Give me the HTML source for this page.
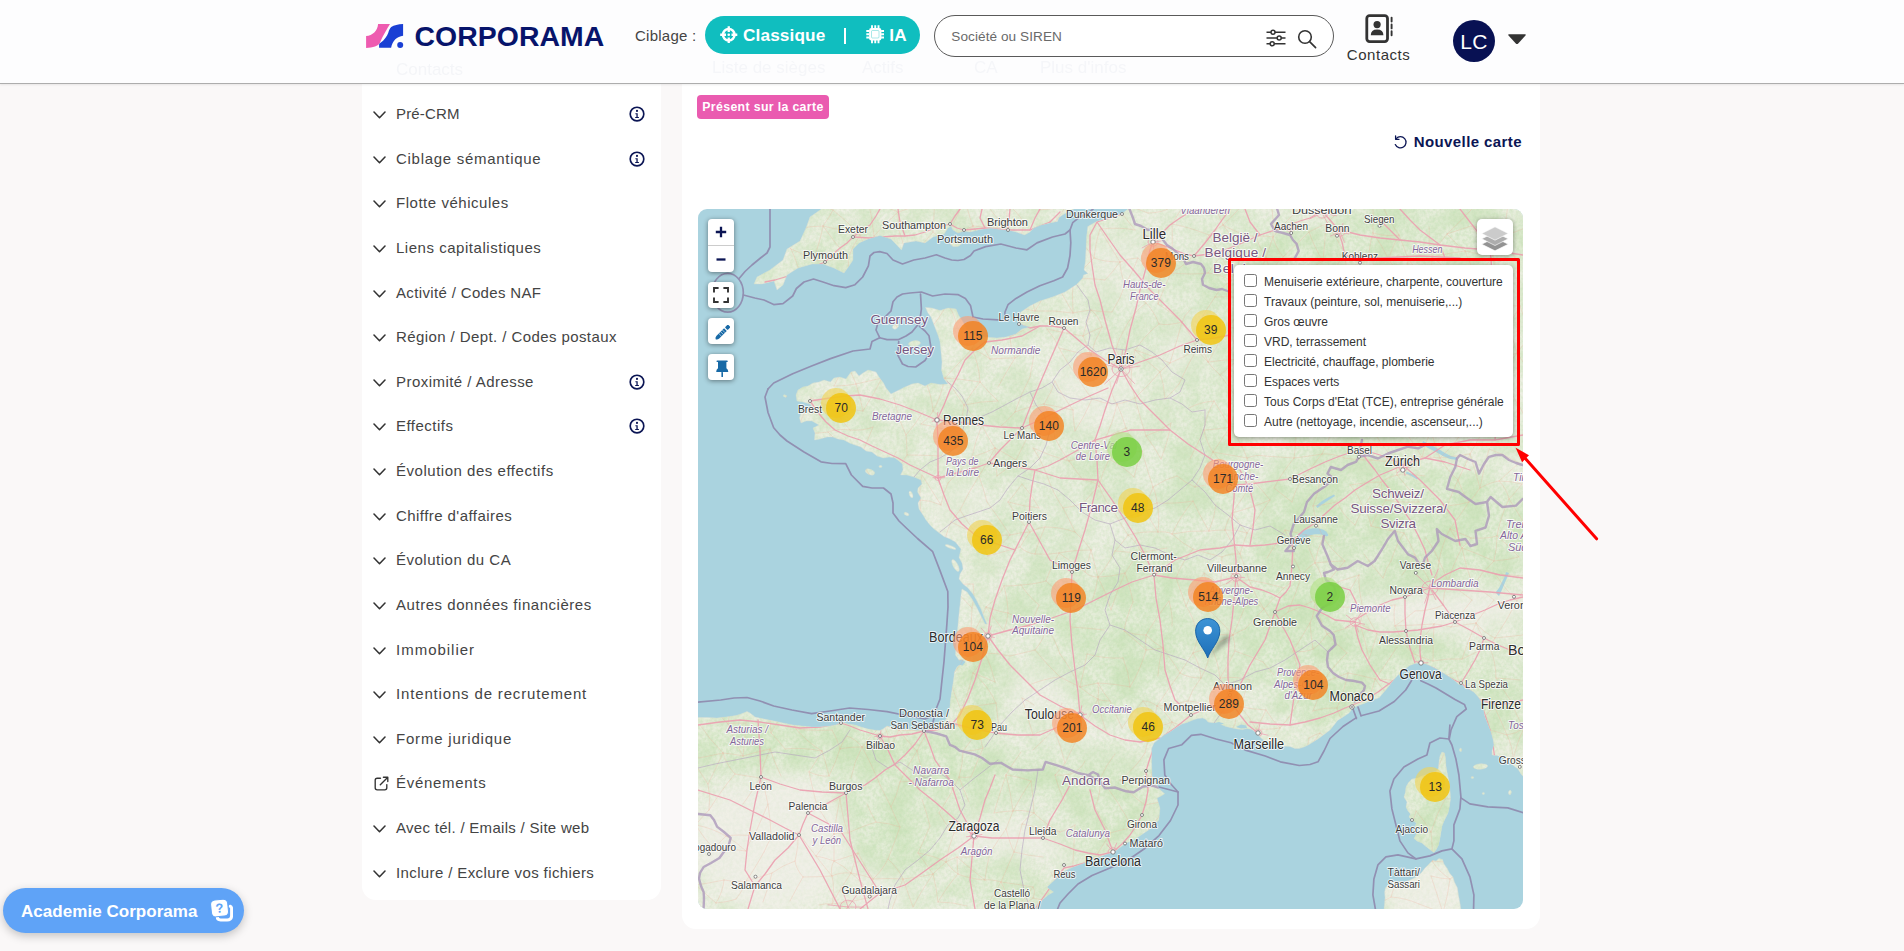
<!DOCTYPE html>
<html lang="fr"><head><meta charset="utf-8"><title>Corporama</title>
<style>
*{box-sizing:border-box;margin:0;padding:0}
html,body{width:1904px;height:951px;overflow:hidden;background:#faf8f8;font-family:"Liberation Sans",sans-serif;color:#333}
.abs{position:absolute}
#hdr{position:absolute;left:0;top:0;width:1904px;height:84px;background:#fdfdfe;border-bottom:1.5px solid #adadad;z-index:50;box-shadow:0 1px 2px rgba(0,0,0,.08)}
#side{position:absolute;left:362px;top:84px;width:299px;height:816px;background:#fff;border-radius:0 0 14px 14px}
#main{position:absolute;left:681.5px;top:84px;width:858.5px;height:845px;background:#fff;border-radius:0 0 14px 14px}
.it{position:absolute;left:396px;font-size:15px;line-height:20px;color:#444;white-space:nowrap}
.chev{position:absolute;left:373px;width:13px;height:8px}
.info{position:absolute;left:629px;width:16px;height:16px}
.t{white-space:nowrap;position:absolute}
</style></head><body>
<div id="side"></div>
<div class="it" style="top:103.5px;letter-spacing:0.171px">Pré-CRM</div>
<svg class="chev" style="top:110.5px" viewBox="0 0 13 8" fill="none" stroke="#333" stroke-width="1.55" stroke-linecap="round" stroke-linejoin="round"><path d="M1 1L6.5 6.7L12 1"/></svg>
<svg class="info" style="top:105.7px" viewBox="0 0 16 16"><circle cx="8" cy="8" r="6.8" fill="none" stroke="#0b1554" stroke-width="1.65"/>
<circle cx="8" cy="4.9" r="1.05" fill="#0b1554"/><path d="M6.4 7.2H8.7V11H9.9V12H6.2V11H7.4V8.2H6.4Z" fill="#0b1554"/></svg>
<div class="it" style="top:148.5px;letter-spacing:0.711px">Ciblage sémantique</div>
<svg class="chev" style="top:155.5px" viewBox="0 0 13 8" fill="none" stroke="#333" stroke-width="1.55" stroke-linecap="round" stroke-linejoin="round"><path d="M1 1L6.5 6.7L12 1"/></svg>
<svg class="info" style="top:150.7px" viewBox="0 0 16 16"><circle cx="8" cy="8" r="6.8" fill="none" stroke="#0b1554" stroke-width="1.65"/>
<circle cx="8" cy="4.9" r="1.05" fill="#0b1554"/><path d="M6.4 7.2H8.7V11H9.9V12H6.2V11H7.4V8.2H6.4Z" fill="#0b1554"/></svg>
<div class="it" style="top:192.5px;letter-spacing:0.530px">Flotte véhicules</div>
<svg class="chev" style="top:199.5px" viewBox="0 0 13 8" fill="none" stroke="#333" stroke-width="1.55" stroke-linecap="round" stroke-linejoin="round"><path d="M1 1L6.5 6.7L12 1"/></svg>
<div class="it" style="top:237.5px;letter-spacing:0.531px">Liens capitalistiques</div>
<svg class="chev" style="top:244.5px" viewBox="0 0 13 8" fill="none" stroke="#333" stroke-width="1.55" stroke-linecap="round" stroke-linejoin="round"><path d="M1 1L6.5 6.7L12 1"/></svg>
<div class="it" style="top:282.5px;letter-spacing:0.350px">Activité / Codes NAF</div>
<svg class="chev" style="top:289.5px" viewBox="0 0 13 8" fill="none" stroke="#333" stroke-width="1.55" stroke-linecap="round" stroke-linejoin="round"><path d="M1 1L6.5 6.7L12 1"/></svg>
<div class="it" style="top:326.5px;letter-spacing:0.414px">Région / Dept. / Codes postaux</div>
<svg class="chev" style="top:333.5px" viewBox="0 0 13 8" fill="none" stroke="#333" stroke-width="1.55" stroke-linecap="round" stroke-linejoin="round"><path d="M1 1L6.5 6.7L12 1"/></svg>
<div class="it" style="top:371.5px;letter-spacing:0.457px">Proximité / Adresse</div>
<svg class="chev" style="top:378.5px" viewBox="0 0 13 8" fill="none" stroke="#333" stroke-width="1.55" stroke-linecap="round" stroke-linejoin="round"><path d="M1 1L6.5 6.7L12 1"/></svg>
<svg class="info" style="top:373.7px" viewBox="0 0 16 16"><circle cx="8" cy="8" r="6.8" fill="none" stroke="#0b1554" stroke-width="1.65"/>
<circle cx="8" cy="4.9" r="1.05" fill="#0b1554"/><path d="M6.4 7.2H8.7V11H9.9V12H6.2V11H7.4V8.2H6.4Z" fill="#0b1554"/></svg>
<div class="it" style="top:415.5px;letter-spacing:0.478px">Effectifs</div>
<svg class="chev" style="top:422.5px" viewBox="0 0 13 8" fill="none" stroke="#333" stroke-width="1.55" stroke-linecap="round" stroke-linejoin="round"><path d="M1 1L6.5 6.7L12 1"/></svg>
<svg class="info" style="top:417.7px" viewBox="0 0 16 16"><circle cx="8" cy="8" r="6.8" fill="none" stroke="#0b1554" stroke-width="1.65"/>
<circle cx="8" cy="4.9" r="1.05" fill="#0b1554"/><path d="M6.4 7.2H8.7V11H9.9V12H6.2V11H7.4V8.2H6.4Z" fill="#0b1554"/></svg>
<div class="it" style="top:460.5px;letter-spacing:0.524px">Évolution des effectifs</div>
<svg class="chev" style="top:467.5px" viewBox="0 0 13 8" fill="none" stroke="#333" stroke-width="1.55" stroke-linecap="round" stroke-linejoin="round"><path d="M1 1L6.5 6.7L12 1"/></svg>
<div class="it" style="top:505.5px;letter-spacing:0.439px">Chiffre d'affaires</div>
<svg class="chev" style="top:512.5px" viewBox="0 0 13 8" fill="none" stroke="#333" stroke-width="1.55" stroke-linecap="round" stroke-linejoin="round"><path d="M1 1L6.5 6.7L12 1"/></svg>
<div class="it" style="top:549.5px;letter-spacing:0.508px">Évolution du CA</div>
<svg class="chev" style="top:556.5px" viewBox="0 0 13 8" fill="none" stroke="#333" stroke-width="1.55" stroke-linecap="round" stroke-linejoin="round"><path d="M1 1L6.5 6.7L12 1"/></svg>
<div class="it" style="top:594.5px;letter-spacing:0.539px">Autres données financières</div>
<svg class="chev" style="top:601.5px" viewBox="0 0 13 8" fill="none" stroke="#333" stroke-width="1.55" stroke-linecap="round" stroke-linejoin="round"><path d="M1 1L6.5 6.7L12 1"/></svg>
<div class="it" style="top:639.5px;letter-spacing:0.991px">Immobilier</div>
<svg class="chev" style="top:646.5px" viewBox="0 0 13 8" fill="none" stroke="#333" stroke-width="1.55" stroke-linecap="round" stroke-linejoin="round"><path d="M1 1L6.5 6.7L12 1"/></svg>
<div class="it" style="top:683.5px;letter-spacing:0.840px">Intentions de recrutement</div>
<svg class="chev" style="top:690.5px" viewBox="0 0 13 8" fill="none" stroke="#333" stroke-width="1.55" stroke-linecap="round" stroke-linejoin="round"><path d="M1 1L6.5 6.7L12 1"/></svg>
<div class="it" style="top:728.5px;letter-spacing:0.792px">Forme juridique</div>
<svg class="chev" style="top:735.5px" viewBox="0 0 13 8" fill="none" stroke="#333" stroke-width="1.55" stroke-linecap="round" stroke-linejoin="round"><path d="M1 1L6.5 6.7L12 1"/></svg>
<div class="it" style="top:772.5px;letter-spacing:0.701px">Événements</div>
<svg class="abs" style="left:373.7px;top:775.5px" width="15" height="15" viewBox="0 0 15 15" fill="none" stroke="#333" stroke-width="1.35" stroke-linecap="round" stroke-linejoin="round">
<path d="M6.5 2.2H3.2Q1.2 2.2 1.2 4.2V11.8Q1.2 13.8 3.2 13.8H10.8Q12.8 13.8 12.8 11.8V8.6"/><path d="M6.3 8.7L13.8 1.2M9.4 1.2H13.8V5.6"/></svg>
<div class="it" style="top:817.5px;letter-spacing:0.296px">Avec tél. / Emails / Site web</div>
<svg class="chev" style="top:824.5px" viewBox="0 0 13 8" fill="none" stroke="#333" stroke-width="1.55" stroke-linecap="round" stroke-linejoin="round"><path d="M1 1L6.5 6.7L12 1"/></svg>
<div class="it" style="top:862.5px;letter-spacing:0.382px">Inclure / Exclure vos fichiers</div>
<svg class="chev" style="top:869.5px" viewBox="0 0 13 8" fill="none" stroke="#333" stroke-width="1.55" stroke-linecap="round" stroke-linejoin="round"><path d="M1 1L6.5 6.7L12 1"/></svg>
<div id="main"></div>
<div class="abs" style="left:697px;top:95px;width:132px;height:24px;border-radius:4px;background:#ea5bb0"></div>
<div class="t" style="left:702.3px;top:99.5px;font-size:12.3px;line-height:15px;font-weight:700;color:#fff;letter-spacing:0.357px">Présent sur la carte</div>
<svg class="abs" style="left:1392.5px;top:134.7px" width="15" height="15" viewBox="0 0 15 15" fill="none" stroke="#0b1554" stroke-width="1.3" stroke-linecap="round" stroke-linejoin="round">
<path d="M3.2 3.6A5.6 5.6 0 1 1 2.3 9.6"/><path d="M2.6 0.9V4.3H6"/></svg>
<div class="t" style="left:1413.7px;top:132.5px;font-size:15px;line-height:18px;font-weight:700;color:#0b1554;letter-spacing:0.411px">Nouvelle carte</div>
<svg class="abs" style="left:698px;top:209px;border-radius:9px" width="825" height="700" viewBox="698 209 825 700">
<defs><clipPath id="land"><polygon points="823,205 821.5,209 810,217 806,228 800,241 787,249 783,260 770,270 757,277 754,284 762,284 774,281 777,290 783,285 787,275 798,268 812,264 823,264 834,268 844,273 849,266 853,260 853,249 859,243 868,239 880,235.5 891,239 901.5,250 904,243 916,241 925,243 933,237 944,234 948,228 951,226 953,230 958,233 964,231 970,232 980,229.5 991,228 1001,229.5 1008,230 1016,232 1024.7,235 1030,232 1033.6,228 1041,225 1051,222.7 1057.5,221.4 1059,217.6 1062.6,215 1067.6,212 1074,209 1076,205"/><polygon points="949,243 953,241.5 958,242 961.5,244 958,246.5 953,246.5"/><polygon points="1129,205 1128,209 1122,213.8 1109,217.6 1096.6,221.4 1087.8,226.5 1086.6,236.5 1086,249 1085.3,261.8 1084,270 1088,273.5 1083.5,275 1082.8,278 1076.5,284.5 1065,292 1052.5,297 1039.9,301 1029.8,306 1021,312 1017.5,321 1023,325 1030,327 1022,329 1016,334 1006,337 997,338 985,337 975,335 967,330 963,322 958.5,315 956,309 948,308 940,310.5 932,308 925.5,307.5 928,313 931,317 934.6,326.4 938,335 940,341.5 941,352 942,362 941.5,370 944,379 948,384 940,384.5 931,383 925,386 918,383 912,384 905,387 899,390 891,394 886,388 883.5,383 879,377 876,372 868,370 863,373 859,376 855,371 851,372 846,379 840,377 834,378 830.5,382 824,380 819,382 813,383 808,386 803,387 798,390 796,395 797,401 803,402 810,404 813,408 806,410 801,413 799.5,418 801,423 806,421 812,421 819,425 813,428 815,433 814.5,440 820,439 827,437 833,437 838,439 844,440 849.5,443 855,445 861,447 866,451 872,452 877,456 883.5,458 889,457 895,458 899,461 902.5,464 903,470 900.6,475 907,475 914,477 921,480 922,484 918,488 917.6,492 921,498 918,503 919,509 923,515 926,520 930,525 933.5,528.5 938,532 944,536.6 950,539 955.4,542 961,549 959,557.4 962,563 963,569 960,574 959,579 963,584 968,588 973,594 977,601 981,609 984,617 987,624 985,624 981,616 977,608 972,599 967,592 962,589 961,595 960,605 959,614 958,625 957,635 956,645 955.5,655 959,660 961,664 957,667 954.5,672 953.5,680.5 952,690 950.5,700 949.7,709 948,716 944,722 938,728 930,729.5 925,729.7 915.7,730.6 909,729 902.5,729.7 895,728 887,726 883,729 880,730.6 874,730 868,729 861,727 855,725 848,724 842,722 836,725 830.5,726 820,727 811.6,727 802,726 793,725 783,723 774,721 764,719 755,717 750,713 747,711.5 741,714 736,715.5 726,717 717,718 707,717.5 694,717.4 694,913 1033,913 1035,909 1042.5,899.8 1048,895 1053.5,892 1049,889 1047,887 1054,880.6 1063,871.8 1072,867.4 1082,863.7 1095.5,858.5 1107,854 1114,852 1125,843.8 1136.7,838 1150,829 1158.8,820 1160,808.5 1157,798 1161,796 1164.7,793.7 1159,789 1155.9,783.4 1152,776 1151.6,763.7 1151.6,748.5 1154,743 1159,739 1164,735 1170.5,731.5 1176,727.5 1182,724 1187,722.5 1193,720 1198,718.5 1202.7,718 1206,719.5 1208,722 1214,723 1220,724 1226,726.5 1231,727.7 1237,729 1242.5,729.6 1247,728.5 1252,729.6 1255,732 1257.6,734 1261,738 1265,741 1270,743 1276.5,744.7 1283,746 1290,746.6 1295,748.5 1299,748.5 1304,747 1308.7,744.7 1313,742 1318,739 1324,734.5 1330,730 1334,725 1337.5,720.5 1343,717 1349,713 1352.7,708 1358,705.5 1364,703.4 1371,700.5 1379,697.7 1384,692 1388.6,686.4 1393,680.5 1398,675 1403.5,670 1409.5,665.5 1415,663.5 1420.8,662.7 1426,664 1432,666.5 1438,669.5 1443.5,673 1449,676.5 1455,680.7 1459,684.5 1462.5,684.5 1465,688 1468,688.5 1473.8,692 1478,696.5 1481.4,701.5 1483.5,709 1485,716.7 1488,724 1491,731.8 1493,739 1494,745 1492,751 1492,755 1497,755.5 1502,757 1506,760 1510,763 1514,766 1518,769 1521,774 1527,781 1527,205"/><polygon points="1442,752 1444.5,753 1445.5,758 1446,766 1447,772 1448.5,779 1450,790 1450.5,799 1449.5,806 1448,813 1444.5,820 1442,826 1441,832 1440,838 1438.5,845 1436.5,849 1434,852.5 1430.5,850 1426,846.5 1422,843 1417,841 1414,838.5 1416.5,834 1418.5,830 1415,826.5 1416.5,823 1412,820 1409,817 1410.5,814 1408,811 1406,807 1407,802 1404,797 1405.5,792 1406,787 1408.5,782.5 1412,779 1418,778 1422,776 1426,775 1431,772.5 1436,771.5 1438.5,768 1439,762 1440,756"/><polygon points="1383.5,913 1384.5,904 1385,897.8 1384.6,892 1385.4,887.9 1388.5,884.5 1393,882 1398,881.5 1404,882 1410,880 1416,877 1421,873 1425,868 1429,864 1432.6,860.3 1436,861 1439,858.5 1442.5,859.5 1444,864 1447,868 1449.5,873 1453,877 1454.5,882 1457.5,888 1458.5,895 1460,903 1461.5,913"/><ellipse cx="914.5" cy="343.5" rx="6" ry="2.8" transform="rotate(-8 914.5 343.5)"/><ellipse cx="895.5" cy="326.5" rx="3.2" ry="2.3" transform="rotate(-35 895.5 326.5)"/><ellipse cx="904.5" cy="319.5" rx="1.6" ry="1.0" transform="rotate(0 904.5 319.5)"/><ellipse cx="870" cy="472" rx="4.8" ry="2.6" transform="rotate(22 870 472)"/><ellipse cx="911" cy="494.5" rx="1.6" ry="3.5" transform="rotate(-20 911 494.5)"/><ellipse cx="906.5" cy="514" rx="2.6" ry="1.4" transform="rotate(25 906.5 514)"/><ellipse cx="950.5" cy="547" rx="5.6" ry="1.4" transform="rotate(20 950.5 547)"/><ellipse cx="955.5" cy="565.5" rx="2.4" ry="6.6" transform="rotate(-28 955.5 565.5)"/><ellipse cx="1480.5" cy="766.5" rx="7.2" ry="2.8" transform="rotate(-4 1480.5 766.5)"/><ellipse cx="1460.6" cy="749.9" rx="1.1" ry="1.7" transform="rotate(0 1460.6 749.9)"/><ellipse cx="1472.4" cy="777.5" rx="1.3" ry="1.0" transform="rotate(0 1472.4 777.5)"/><ellipse cx="1483.4" cy="793.4" rx="1.1" ry="1.0" transform="rotate(0 1483.4 793.4)"/><ellipse cx="1509.9" cy="792.5" rx="1.4" ry="2.2" transform="rotate(10 1509.9 792.5)"/><ellipse cx="880.5" cy="466.5" rx="1.6" ry="0.9" transform="rotate(0 880.5 466.5)"/><ellipse cx="785" cy="396" rx="1.8" ry="1.0" transform="rotate(20 785 396)"/></clipPath><filter id="bl6" x="-30%" y="-30%" width="160%" height="160%"><feGaussianBlur stdDeviation="6"/></filter><filter id="bl3" x="-30%" y="-30%" width="160%" height="160%"><feGaussianBlur stdDeviation="3"/></filter><filter id="bl10" x="-40%" y="-40%" width="180%" height="180%"><feGaussianBlur stdDeviation="9"/></filter><filter id="nz" x="0" y="0" width="100%" height="100%" color-interpolation-filters="sRGB"><feTurbulence type="fractalNoise" baseFrequency="0.035" numOctaves="3" seed="5"/><feColorMatrix values="0 0 0 0 0.78  0 0 0 0 0.88  0 0 0 0 0.71  2.8 0 0 0 -1.0"/></filter><filter id="nz2" x="0" y="0" width="100%" height="100%" color-interpolation-filters="sRGB"><feTurbulence type="fractalNoise" baseFrequency="0.3" numOctaves="2" seed="9"/><feColorMatrix values="0 0 0 0 0.74  0 0 0 0 0.86  0 0 0 0 0.68  1.8 0 0 0 -0.62"/></filter></defs>
<rect x="698" y="209" width="825" height="700" fill="#aad3df"/>
<g fill="#f1f0e8" stroke="#c9d7d6" stroke-width="0.5">
<polygon points="823,205 821.5,209 810,217 806,228 800,241 787,249 783,260 770,270 757,277 754,284 762,284 774,281 777,290 783,285 787,275 798,268 812,264 823,264 834,268 844,273 849,266 853,260 853,249 859,243 868,239 880,235.5 891,239 901.5,250 904,243 916,241 925,243 933,237 944,234 948,228 951,226 953,230 958,233 964,231 970,232 980,229.5 991,228 1001,229.5 1008,230 1016,232 1024.7,235 1030,232 1033.6,228 1041,225 1051,222.7 1057.5,221.4 1059,217.6 1062.6,215 1067.6,212 1074,209 1076,205"/>
<polygon points="949,243 953,241.5 958,242 961.5,244 958,246.5 953,246.5"/>
<polygon points="1129,205 1128,209 1122,213.8 1109,217.6 1096.6,221.4 1087.8,226.5 1086.6,236.5 1086,249 1085.3,261.8 1084,270 1088,273.5 1083.5,275 1082.8,278 1076.5,284.5 1065,292 1052.5,297 1039.9,301 1029.8,306 1021,312 1017.5,321 1023,325 1030,327 1022,329 1016,334 1006,337 997,338 985,337 975,335 967,330 963,322 958.5,315 956,309 948,308 940,310.5 932,308 925.5,307.5 928,313 931,317 934.6,326.4 938,335 940,341.5 941,352 942,362 941.5,370 944,379 948,384 940,384.5 931,383 925,386 918,383 912,384 905,387 899,390 891,394 886,388 883.5,383 879,377 876,372 868,370 863,373 859,376 855,371 851,372 846,379 840,377 834,378 830.5,382 824,380 819,382 813,383 808,386 803,387 798,390 796,395 797,401 803,402 810,404 813,408 806,410 801,413 799.5,418 801,423 806,421 812,421 819,425 813,428 815,433 814.5,440 820,439 827,437 833,437 838,439 844,440 849.5,443 855,445 861,447 866,451 872,452 877,456 883.5,458 889,457 895,458 899,461 902.5,464 903,470 900.6,475 907,475 914,477 921,480 922,484 918,488 917.6,492 921,498 918,503 919,509 923,515 926,520 930,525 933.5,528.5 938,532 944,536.6 950,539 955.4,542 961,549 959,557.4 962,563 963,569 960,574 959,579 963,584 968,588 973,594 977,601 981,609 984,617 987,624 985,624 981,616 977,608 972,599 967,592 962,589 961,595 960,605 959,614 958,625 957,635 956,645 955.5,655 959,660 961,664 957,667 954.5,672 953.5,680.5 952,690 950.5,700 949.7,709 948,716 944,722 938,728 930,729.5 925,729.7 915.7,730.6 909,729 902.5,729.7 895,728 887,726 883,729 880,730.6 874,730 868,729 861,727 855,725 848,724 842,722 836,725 830.5,726 820,727 811.6,727 802,726 793,725 783,723 774,721 764,719 755,717 750,713 747,711.5 741,714 736,715.5 726,717 717,718 707,717.5 694,717.4 694,913 1033,913 1035,909 1042.5,899.8 1048,895 1053.5,892 1049,889 1047,887 1054,880.6 1063,871.8 1072,867.4 1082,863.7 1095.5,858.5 1107,854 1114,852 1125,843.8 1136.7,838 1150,829 1158.8,820 1160,808.5 1157,798 1161,796 1164.7,793.7 1159,789 1155.9,783.4 1152,776 1151.6,763.7 1151.6,748.5 1154,743 1159,739 1164,735 1170.5,731.5 1176,727.5 1182,724 1187,722.5 1193,720 1198,718.5 1202.7,718 1206,719.5 1208,722 1214,723 1220,724 1226,726.5 1231,727.7 1237,729 1242.5,729.6 1247,728.5 1252,729.6 1255,732 1257.6,734 1261,738 1265,741 1270,743 1276.5,744.7 1283,746 1290,746.6 1295,748.5 1299,748.5 1304,747 1308.7,744.7 1313,742 1318,739 1324,734.5 1330,730 1334,725 1337.5,720.5 1343,717 1349,713 1352.7,708 1358,705.5 1364,703.4 1371,700.5 1379,697.7 1384,692 1388.6,686.4 1393,680.5 1398,675 1403.5,670 1409.5,665.5 1415,663.5 1420.8,662.7 1426,664 1432,666.5 1438,669.5 1443.5,673 1449,676.5 1455,680.7 1459,684.5 1462.5,684.5 1465,688 1468,688.5 1473.8,692 1478,696.5 1481.4,701.5 1483.5,709 1485,716.7 1488,724 1491,731.8 1493,739 1494,745 1492,751 1492,755 1497,755.5 1502,757 1506,760 1510,763 1514,766 1518,769 1521,774 1527,781 1527,205"/>
<polygon points="1442,752 1444.5,753 1445.5,758 1446,766 1447,772 1448.5,779 1450,790 1450.5,799 1449.5,806 1448,813 1444.5,820 1442,826 1441,832 1440,838 1438.5,845 1436.5,849 1434,852.5 1430.5,850 1426,846.5 1422,843 1417,841 1414,838.5 1416.5,834 1418.5,830 1415,826.5 1416.5,823 1412,820 1409,817 1410.5,814 1408,811 1406,807 1407,802 1404,797 1405.5,792 1406,787 1408.5,782.5 1412,779 1418,778 1422,776 1426,775 1431,772.5 1436,771.5 1438.5,768 1439,762 1440,756"/>
<polygon points="1383.5,913 1384.5,904 1385,897.8 1384.6,892 1385.4,887.9 1388.5,884.5 1393,882 1398,881.5 1404,882 1410,880 1416,877 1421,873 1425,868 1429,864 1432.6,860.3 1436,861 1439,858.5 1442.5,859.5 1444,864 1447,868 1449.5,873 1453,877 1454.5,882 1457.5,888 1458.5,895 1460,903 1461.5,913"/>
<ellipse cx="914.5" cy="343.5" rx="6" ry="2.8" transform="rotate(-8 914.5 343.5)"/>
<ellipse cx="895.5" cy="326.5" rx="3.2" ry="2.3" transform="rotate(-35 895.5 326.5)"/>
<ellipse cx="904.5" cy="319.5" rx="1.6" ry="1.0" transform="rotate(0 904.5 319.5)"/>
<ellipse cx="870" cy="472" rx="4.8" ry="2.6" transform="rotate(22 870 472)"/>
<ellipse cx="911" cy="494.5" rx="1.6" ry="3.5" transform="rotate(-20 911 494.5)"/>
<ellipse cx="906.5" cy="514" rx="2.6" ry="1.4" transform="rotate(25 906.5 514)"/>
<ellipse cx="950.5" cy="547" rx="5.6" ry="1.4" transform="rotate(20 950.5 547)"/>
<ellipse cx="955.5" cy="565.5" rx="2.4" ry="6.6" transform="rotate(-28 955.5 565.5)"/>
<ellipse cx="1480.5" cy="766.5" rx="7.2" ry="2.8" transform="rotate(-4 1480.5 766.5)"/>
<ellipse cx="1460.6" cy="749.9" rx="1.1" ry="1.7" transform="rotate(0 1460.6 749.9)"/>
<ellipse cx="1472.4" cy="777.5" rx="1.3" ry="1.0" transform="rotate(0 1472.4 777.5)"/>
<ellipse cx="1483.4" cy="793.4" rx="1.1" ry="1.0" transform="rotate(0 1483.4 793.4)"/>
<ellipse cx="1509.9" cy="792.5" rx="1.4" ry="2.2" transform="rotate(10 1509.9 792.5)"/>
<ellipse cx="880.5" cy="466.5" rx="1.6" ry="0.9" transform="rotate(0 880.5 466.5)"/>
<ellipse cx="785" cy="396" rx="1.8" ry="1.0" transform="rotate(20 785 396)"/>
</g>
<mask id="gm" maskUnits="userSpaceOnUse" x="698" y="209" width="825" height="700"><rect x="698" y="209" width="825" height="700" fill="#000"/><g filter="url(#bl10)">
<ellipse cx="800" cy="745" rx="125" ry="26" transform="rotate(2 800 745)" fill="#fff" opacity="1"/>
<ellipse cx="950" cy="768" rx="70" ry="34" transform="rotate(10 950 768)" fill="#fff" opacity="1"/>
<ellipse cx="1062" cy="778" rx="100" ry="20" transform="rotate(6 1062 778)" fill="#fff" opacity="1"/>
<ellipse cx="1010" cy="768" rx="60" ry="12" transform="rotate(8 1010 768)" fill="#fff" opacity="0.8"/>
<ellipse cx="900" cy="836" rx="50" ry="42" transform="rotate(30 900 836)" fill="#fff" opacity="0.9"/>
<ellipse cx="885" cy="760" rx="40" ry="22" transform="rotate(0 885 760)" fill="#fff" opacity="0.7"/>
<ellipse cx="1000" cy="885" rx="50" ry="25" transform="rotate(0 1000 885)" fill="#fff" opacity="0.7"/>
<ellipse cx="1102" cy="822" rx="45" ry="30" transform="rotate(-20 1102 822)" fill="#fff" opacity="0.85"/>
<ellipse cx="978" cy="682" rx="26" ry="46" transform="rotate(8 978 682)" fill="#fff" opacity="1"/>
<ellipse cx="1050" cy="600" rx="45" ry="40" transform="rotate(0 1050 600)" fill="#fff" opacity="0.7"/>
<ellipse cx="1140" cy="620" rx="55" ry="70" transform="rotate(10 1140 620)" fill="#fff" opacity="0.9"/>
<ellipse cx="1110" cy="690" rx="40" ry="30" transform="rotate(0 1110 690)" fill="#fff" opacity="0.7"/>
<ellipse cx="1300" cy="640" rx="52" ry="82" transform="rotate(-12 1300 640)" fill="#fff" opacity="1"/>
<ellipse cx="1335" cy="700" rx="40" ry="30" transform="rotate(0 1335 700)" fill="#fff" opacity="0.9"/>
<ellipse cx="1290" cy="560" rx="42" ry="42" transform="rotate(0 1290 560)" fill="#fff" opacity="0.85"/>
<ellipse cx="1300" cy="500" rx="36" ry="42" transform="rotate(20 1300 500)" fill="#fff" opacity="0.85"/>
<ellipse cx="1335" cy="440" rx="42" ry="32" transform="rotate(0 1335 440)" fill="#fff" opacity="0.8"/>
<ellipse cx="1420" cy="520" rx="112" ry="56" transform="rotate(5 1420 520)" fill="#fff" opacity="1"/>
<ellipse cx="1440" cy="572" rx="90" ry="20" transform="rotate(0 1440 572)" fill="#fff" opacity="0.8"/>
<ellipse cx="1430" cy="660" rx="82" ry="22" transform="rotate(22 1430 660)" fill="#fff" opacity="0.9"/>
<ellipse cx="1500" cy="705" rx="30" ry="46" transform="rotate(10 1500 705)" fill="#fff" opacity="0.8"/>
<ellipse cx="1372" cy="662" rx="36" ry="30" transform="rotate(0 1372 662)" fill="#fff" opacity="0.85"/>
<ellipse cx="1420" cy="245" rx="115" ry="45" transform="rotate(0 1420 245)" fill="#fff" opacity="0.8"/>
<ellipse cx="1270" cy="272" rx="72" ry="46" transform="rotate(-10 1270 272)" fill="#fff" opacity="0.85"/>
<ellipse cx="1200" cy="470" rx="42" ry="52" transform="rotate(0 1200 470)" fill="#fff" opacity="0.7"/>
<ellipse cx="1100" cy="465" rx="36" ry="26" transform="rotate(0 1100 465)" fill="#fff" opacity="0.7"/>
<ellipse cx="960" cy="400" rx="62" ry="26" transform="rotate(0 960 400)" fill="#fff" opacity="0.35"/>
<ellipse cx="1431" cy="806" rx="22" ry="46" transform="rotate(-8 1431 806)" fill="#fff" opacity="1"/>
<ellipse cx="832" cy="250" rx="42" ry="15" transform="rotate(-25 832 250)" fill="#fff" opacity="0.6"/>
<ellipse cx="1222" cy="382" rx="42" ry="62" transform="rotate(0 1222 382)" fill="#fff" opacity="0.55"/>
<ellipse cx="1020" cy="530" rx="40" ry="30" transform="rotate(0 1020 530)" fill="#fff" opacity="0.4"/>
<ellipse cx="1180" cy="770" rx="30" ry="16" transform="rotate(0 1180 770)" fill="#fff" opacity="0.6"/>
<ellipse cx="870" cy="792" rx="28" ry="50" transform="rotate(0 870 792)" fill="#fff" opacity="0.6"/>
<ellipse cx="1080" cy="650" rx="40" ry="40" transform="rotate(0 1080 650)" fill="#fff" opacity="0.5"/>
<ellipse cx="1230" cy="640" rx="30" ry="50" transform="rotate(0 1230 640)" fill="#fff" opacity="0.55"/>
<ellipse cx="1175" cy="545" rx="30" ry="30" transform="rotate(0 1175 545)" fill="#fff" opacity="0.5"/>
<ellipse cx="960" cy="235" rx="60" ry="10" transform="rotate(0 960 235)" fill="#fff" opacity="0.4"/>
<ellipse cx="1150" cy="300" rx="60" ry="50" transform="rotate(0 1150 300)" fill="#fff" opacity="0.3"/>
<ellipse cx="1040" cy="420" rx="40" ry="30" transform="rotate(0 1040 420)" fill="#fff" opacity="0.35"/>
<ellipse cx="860" cy="420" rx="50" ry="20" transform="rotate(0 860 420)" fill="#fff" opacity="0.3"/>
<ellipse cx="1000" cy="470" rx="30" ry="20" transform="rotate(0 1000 470)" fill="#fff" opacity="0.3"/>
<ellipse cx="740" cy="770" rx="30" ry="16" transform="rotate(0 740 770)" fill="#fff" opacity="0.5"/>
</g></mask>
<mask id="bm" maskUnits="userSpaceOnUse" x="698" y="209" width="825" height="700"><rect x="698" y="209" width="825" height="700" fill="#fff"/><g filter="url(#bl10)">
<ellipse cx="770" cy="842" rx="78" ry="72" transform="rotate(0 770 842)" fill="#000" opacity="0.9"/>
<ellipse cx="1000" cy="838" rx="58" ry="17" transform="rotate(5 1000 838)" fill="#000" opacity="0.8"/>
<ellipse cx="1452" cy="610" rx="78" ry="22" transform="rotate(-6 1452 610)" fill="#000" opacity="0.9"/>
<ellipse cx="1090" cy="392" rx="46" ry="36" transform="rotate(0 1090 392)" fill="#000" opacity="0.6"/>
<ellipse cx="1190" cy="350" rx="30" ry="35" transform="rotate(0 1190 350)" fill="#000" opacity="0.5"/>
<ellipse cx="1040" cy="690" rx="36" ry="26" transform="rotate(0 1040 690)" fill="#000" opacity="0.5"/>
<ellipse cx="1076" cy="726" rx="26" ry="18" transform="rotate(0 1076 726)" fill="#000" opacity="0.5"/>
<ellipse cx="960" cy="510" rx="30" ry="30" transform="rotate(0 960 510)" fill="#000" opacity="0.4"/>
<ellipse cx="1120" cy="272" rx="40" ry="34" transform="rotate(0 1120 272)" fill="#000" opacity="0.5"/>
<ellipse cx="1172" cy="736" rx="20" ry="10" transform="rotate(0 1172 736)" fill="#000" opacity="0.4"/>
<ellipse cx="1046" cy="846" rx="25" ry="14" transform="rotate(0 1046 846)" fill="#000" opacity="0.5"/>
<ellipse cx="1395" cy="625" rx="35" ry="22" transform="rotate(0 1395 625)" fill="#000" opacity="0.6"/>
<ellipse cx="880" cy="885" rx="35" ry="25" transform="rotate(0 880 885)" fill="#000" opacity="0.6"/>
<ellipse cx="1425" cy="892" rx="42" ry="30" transform="rotate(0 1425 892)" fill="#000" opacity="0.85"/>
</g></mask>
<g clip-path="url(#land)">
<g mask="url(#bm)">
<rect x="698" y="209" width="825" height="700" fill="#e4efd8" opacity=".3"/>
<rect x="698" y="209" width="825" height="700" filter="url(#nz)" opacity=".4"/>
<rect x="698" y="209" width="825" height="700" filter="url(#nz2)" opacity=".3"/>
</g>
<rect x="698" y="209" width="825" height="700" filter="url(#nz2)" opacity=".12"/>
<g mask="url(#gm)">
<rect x="698" y="209" width="825" height="700" fill="#d6e8c8" opacity=".45"/>
<rect x="698" y="209" width="825" height="700" filter="url(#nz)" opacity=".55"/>
<rect x="698" y="209" width="825" height="700" filter="url(#nz2)" opacity=".4"/>
</g>
</g>
<g fill="#aad3df">
<polygon points="1294.4,547.7 1295.5,540 1297.8,534.2 1302,531 1307.9,529.2 1313,528.3 1318,528.3 1323,529.5 1326.4,531.7 1328.5,535 1327,536.5 1323,535 1319.6,534.2 1315,534.3 1311.2,535.1 1306.5,537 1302.8,539.3 1300,542 1297.8,544.3 1296,546.5"/>
<polygon points="1316,506 1322,501 1328,497.5 1334,494.5 1335,496 1329.5,499.5 1323.5,503.5 1317.5,508"/>
<polygon points="1423,441 1431,445 1438.5,449 1445,453 1451,456 1457,457.5 1457.5,460 1450,459 1443,456 1436,452 1428,448 1422,444"/>
<polygon points="1406.5,471.5 1411,473.5 1418,478 1417,479.5 1410.5,475.5 1406,473.5"/>
<polygon points="1506,572 1509,573 1506,580 1503.5,586 1501,592 1499,596 1495.5,592.5 1499,588 1502,582 1504.5,577"/>
<polygon points="1236,727 1241,724.5 1246,725.5 1247,728 1241,728.5"/>
<polygon points="1212,723.5 1219,722 1224,723.5 1218,725.5"/>
<polygon points="957.5,661 962,659.5 965.5,662 962.5,665.5 958.5,664.5"/>
</g>
<g fill="none" stroke-linejoin="round" stroke-linecap="round">
<g stroke="#8b7ea6" stroke-width="1.7" opacity=".78">
<polyline points="770,205 770,247 767,253 760.5,258 752,265 745,271.5 738.7,279"/>
<polyline points="743.4,295 754.8,298 764,300 773.7,304.6 783,303.7 792.7,296 796.4,288.5 804,282 813.5,279 823,282 834,285.7 845.7,287.6 855,284.7 862.7,277 868.4,265.8 870,256 874,252.5 879.7,251.6 887,253.5 893,260 902.5,264 913.8,260 925,258 936.4,254.8 945,258 951.7,260 957.9,260.5 964,259.5 970.5,255.5 974,251 985.6,246.6 1000.8,244 1016,248 1027,249.8 1037,242.9 1052.5,237 1065,234 1070,230 1072.7,222.7 1079,217.6 1089,212.6 1093,209 1096,205"/>
<polyline points="1070,230 1070.8,242.9 1070,255.5 1067.6,268 1062.6,277 1053.8,280.7 1039.9,285.8 1027,292 1016,298.4 1008,304.7 1005,312 1004.5,319.8 998,319.8 983,319 973,317"/>
<polyline points="973,317 970.5,305.4 965.4,298.4 957.9,294.6 945,294 932.6,296 921.4,292 910,293 902.5,294 897,297 893,301.8 891,311 885,317 878,322.6 876,330 879.7,337.7"/>
<polyline points="879.7,337.7 872,341.5 870,349 853,351 830.5,358.6 811.6,366 792.7,373.7 773.7,383 768,389"/>
<polyline points="879.7,337.7 887,339.6 898.7,339.6 906,336 912,332 919.5,322.6 921.4,309 920.5,294"/>
<polyline points="919.5,326.4 925,331 929,335.8 930.9,347 929,354 925,360.5 915.7,367 908,366.5 902.5,364 897.7,354.8 898.7,341.5"/>
<polyline points="768,389 765,397 768,412.5 773.7,427.7 780,435 787,441 804,452 821,461.8 832,463.5 845.7,463.7 851.4,475 862.7,486.4 872,488 883.5,488 891,494 893,503 893,512.9 899,521 906.3,528 917.5,538.5 932.7,551.7 940,570.6 947.8,591.5 948,607 946.9,623.7 945.5,642 944,661.5 942,680 940,699 936.5,708 932.8,723"/>
<polyline points="694,702.5 720.7,700 734,698 747,697.5 760,701 773.7,706 792,710 811.6,713.6 830,711 849.5,708 868,709.5 887,711.7 906,715.5 925,719 930,717 934.6,713.6"/>
<polyline points="1159,787 1170.5,790 1178,792 1178,805 1170.5,820.5 1159,835.6 1144,849 1128,860 1110,868 1092,875.5 1078,884 1068,894 1060,903 1056,913"/>
<polyline points="1178,792 1170,783 1164.8,775 1163.9,759.9 1168.6,748.5 1181.9,744.7 1191.4,735.3 1200.8,734.3 1216,739 1231,742.8 1246.3,750.4 1265.2,756 1280.3,761.8 1299.3,765.5 1310,764.5 1318,761.8 1324,751 1330,738.5 1343,726.5 1356.4,717.6"/>
<polyline points="1352.7,708 1356.4,718.5"/>
<polyline points="1358,707 1361,715.7"/>
<polyline points="1361,715.7 1379,711 1394.3,701.5 1405.7,690 1411.4,680.7 1414,672"/>
<polyline points="1420.8,680.7 1428,684 1436,688 1455,699.6 1464.4,704.4 1466.3,709 1456.8,716.7 1451,730 1449.2,739.4"/>
<polyline points="1449.9,725 1448.9,739 1439.9,738 1429.9,743 1426.9,755 1417.9,759 1403.9,767 1393.9,779 1389.9,791 1391.9,808.9 1395.9,824.9 1399.9,840.9 1407.9,852.9 1415.9,858.9 1429.9,855.9 1441.9,850.9 1451.9,848.9 1453.9,840.9 1453.9,824.9 1459.9,808.9 1460.9,796.9 1458.9,775 1455.9,759 1451.9,745 1448.9,739"/>
<polyline points="1460.9,797.9 1469.9,803.9 1487.8,806.9 1507.8,807.9 1526,813.5"/>
<polyline points="1415.9,858.9 1397.9,854.9 1385.9,856.9 1377.9,864.9 1373.9,878.9 1372.9,894.9 1375.9,912"/>
<polyline points="1451.9,848.9 1461.9,858.9 1469.9,876.8 1473.9,894.9 1473.5,912"/>
<ellipse cx="727.7" cy="292.7" rx="15.6" ry="19.4"/>
</g>
<g clip-path="url(#land)">
<path d="M689 206Q705 203 722 204M689 206Q700 213 707 225M722 204Q733 206 740 206M722 204Q712 214 707 225M760 205Q776 208 792 210M760 205Q756 219 748 234M792 210Q800 205 809 202M809 202Q822 205 833 210M809 202Q804 213 796 229M833 210Q846 220 860 235M833 210Q829 218 823 226M868 198Q883 207 898 212M868 198Q872 217 874 236M898 212Q909 208 917 207M898 212Q899 221 898 228M898 212Q883 226 874 236M917 207Q927 202 935 197M935 197Q934 213 933 232M965 198Q968 214 973 226M965 198Q957 218 946 238M985 201Q994 217 1007 227M1007 204Q1018 212 1024 223M1007 204Q1007 217 1007 227M1039 210Q1054 209 1065 207M1065 207Q1072 221 1073 232M1065 207Q1058 221 1046 231M1090 208Q1101 202 1114 201M1090 208Q1080 218 1073 232M1114 201Q1131 206 1148 213M1114 201Q1123 216 1135 230M1148 213Q1161 213 1170 208M1187 201Q1177 215 1172 224M1212 198Q1230 199 1244 203M1212 198Q1217 213 1223 225M1244 203Q1232 217 1223 225M1271 203Q1287 208 1297 211M1271 203Q1274 218 1273 237M1297 211Q1305 204 1307 200M1297 211Q1286 221 1273 237M1307 200Q1327 205 1347 205M1347 205Q1337 212 1326 224M1373 203Q1373 217 1373 233M1383 207Q1401 202 1419 201M1383 207Q1391 224 1399 235M1419 201Q1425 201 1433 202M1472 209Q1460 222 1447 234M1509 198Q1506 220 1503 236M707 225Q716 229 728 229M707 225Q704 240 707 251M748 234Q751 245 760 253M772 232Q780 240 791 249M796 229Q811 226 823 226M823 226Q843 230 860 235M823 226Q820 242 813 261M823 226Q834 242 848 258M860 235Q852 247 848 258M860 235Q864 244 868 256M874 236Q870 245 868 256M874 236Q881 243 884 248M898 228Q904 243 907 262M933 232Q939 238 946 238M933 232Q919 249 907 262M946 238Q957 234 973 226M946 238Q953 247 957 257M973 226Q990 228 1007 227M973 226Q967 239 957 257M973 226Q981 240 990 259M1007 227Q997 245 990 259M1024 223Q1021 241 1012 263M1046 231Q1037 245 1033 256M1073 232Q1083 243 1094 258M1100 229Q1120 227 1135 230M1100 229Q1096 241 1094 258M1100 229Q1108 243 1120 262M1172 224Q1189 227 1209 235M1172 224Q1173 245 1171 261M1209 235Q1215 230 1223 225M1209 235Q1201 250 1189 260M1209 235Q1216 248 1221 256M1223 225Q1238 234 1256 237M1223 225Q1234 238 1242 253M1256 237Q1262 235 1273 237M1256 237Q1258 245 1266 257M1273 237Q1270 247 1266 257M1273 237Q1275 246 1283 257M1309 232Q1316 228 1326 224M1309 232Q1296 245 1283 257M1309 232Q1315 249 1323 261M1326 224Q1325 242 1323 261M1326 224Q1337 237 1344 253M1373 233Q1386 237 1399 235M1373 233Q1369 246 1369 256M1373 233Q1382 245 1389 260M1399 235Q1391 249 1389 260M1399 235Q1404 247 1408 259M1429 227Q1428 242 1432 257M1447 234Q1459 230 1471 226M1447 234Q1437 245 1432 257M1447 234Q1457 245 1465 251M1471 226Q1487 228 1503 236M1471 226Q1484 242 1493 255M1503 236Q1519 231 1529 226M1503 236Q1499 248 1493 255M1503 236Q1510 247 1517 262M697 250Q696 260 699 272M791 249Q804 254 813 261M791 249Q799 265 802 286M813 261Q832 260 848 258M848 258Q849 266 848 279M868 256Q873 273 882 287M884 248Q885 264 882 287M957 257Q969 270 983 286M957 257Q950 270 947 280M990 259Q1002 262 1012 263M1012 263Q1021 257 1033 256M1033 256Q1045 269 1052 276M1033 256Q1031 266 1024 275M1069 261Q1059 269 1052 276M1094 258Q1104 262 1120 262M1094 258Q1085 267 1073 279M1120 262Q1129 258 1138 258M1120 262Q1120 271 1125 285M1120 262Q1112 273 1105 280M1138 258Q1148 267 1160 279M1138 258Q1134 269 1125 285M1171 261Q1181 262 1189 260M1189 260Q1180 269 1171 273M1221 256Q1227 266 1231 281M1221 256Q1215 263 1208 273M1242 253Q1238 268 1231 281M1266 257Q1268 263 1270 274M1266 257Q1261 273 1249 285M1283 257Q1301 258 1323 261M1283 257Q1274 265 1270 274M1323 261Q1313 268 1302 272M1344 253Q1346 261 1347 273M1344 253Q1338 262 1333 276M1369 256Q1378 258 1389 260M1369 256Q1377 270 1380 279M1369 256Q1358 263 1347 273M1389 260Q1396 270 1405 282M1408 259Q1420 275 1432 287M1408 259Q1408 272 1405 282M1432 257Q1448 253 1465 251M1432 257Q1443 267 1455 275M1432 257Q1431 274 1432 287M1465 251Q1479 255 1493 255M1465 251Q1470 265 1477 275M1493 255Q1495 269 1495 280M1493 255Q1486 268 1477 275M699 272Q712 276 724 283M724 283Q723 291 718 305M724 283Q735 295 742 309M748 275Q744 295 742 309M748 275Q758 290 763 310M802 286Q814 286 825 283M825 283Q825 296 822 309M848 279Q843 291 834 304M882 287Q875 299 867 312M882 287Q883 297 888 306M909 278Q917 293 921 310M929 277Q938 278 947 280M947 280Q959 288 967 300M983 286Q996 288 1006 287M983 286Q987 297 994 310M1006 287Q999 300 994 310M1006 287Q1010 300 1017 308M1024 275Q1019 289 1017 308M1024 275Q1031 294 1035 311M1052 276Q1062 279 1073 279M1052 276Q1045 296 1035 311M1052 276Q1063 296 1073 313M1073 279Q1091 278 1105 280M1073 279Q1072 295 1073 313M1125 285Q1141 283 1160 279M1125 285Q1121 298 1112 312M1125 285Q1135 296 1146 303M1160 279Q1158 293 1158 304M1171 273Q1192 275 1208 273M1171 273Q1164 287 1158 304M1208 273Q1221 274 1231 281M1231 281Q1220 288 1215 297M1249 285Q1257 289 1270 300M1270 274Q1268 288 1270 300M1302 272Q1317 273 1333 276M1302 272Q1305 284 1309 299M1333 276Q1338 271 1347 273M1333 276Q1322 286 1309 299M1333 276Q1339 292 1340 309M1347 273Q1346 292 1340 309M1405 282Q1418 285 1432 287M1405 282Q1401 294 1397 305M1432 287Q1424 292 1422 298M1432 287Q1436 297 1436 305M1455 275Q1464 277 1477 275M1477 275Q1484 290 1492 305M686 303Q701 307 718 305M718 305Q728 321 733 336M742 309Q756 306 763 310M742 309Q744 323 748 336M742 309Q738 325 733 336M763 310Q781 305 796 298M763 310Q755 325 748 336M796 298Q800 312 804 325M796 298Q791 315 785 330M822 309Q826 307 834 304M822 309Q822 321 828 330M822 309Q816 317 804 325M834 304Q851 306 867 312M867 312Q873 323 885 330M867 312Q859 314 854 322M888 306Q904 311 921 310M888 306Q893 322 901 335M888 306Q887 319 885 330M921 310Q925 319 929 330M947 304Q959 300 967 300M947 304Q954 312 956 323M947 304Q940 318 929 330M967 300Q979 304 994 310M967 300Q975 316 978 329M994 310Q987 319 978 329M1017 308Q1026 309 1035 311M1017 308Q1011 326 1010 337M1035 311Q1053 310 1073 313M1073 313Q1082 311 1091 310M1091 310Q1099 312 1112 312M1091 310Q1099 316 1102 327M1091 310Q1086 325 1083 336M1146 303Q1154 311 1159 324M1146 303Q1131 314 1123 332M1158 304Q1168 310 1182 322M1191 309Q1184 315 1182 322M1215 297Q1228 296 1245 298M1215 297Q1204 312 1198 326M1245 298Q1255 299 1270 300M1245 298Q1238 310 1230 327M1270 300Q1270 314 1271 334M1287 310Q1292 323 1296 330M1287 310Q1279 323 1271 334M1309 299Q1326 306 1340 309M1309 299Q1315 311 1324 325M1370 308Q1383 309 1397 305M1370 308Q1365 320 1353 329M1397 305Q1401 317 1403 325M1462 309Q1476 307 1492 305M1462 309Q1474 318 1483 332M1492 305Q1505 306 1520 306M1492 305Q1500 318 1508 326M1520 306Q1525 322 1531 335M1520 306Q1516 314 1508 326M699 328Q695 337 696 352M699 328Q705 344 712 362M733 336Q736 348 735 363M748 336Q768 335 785 330M748 336Q758 342 771 349M785 330Q796 328 804 325M785 330Q787 347 786 359M804 325Q817 326 828 330M804 325Q794 340 786 359M854 322Q867 324 885 330M854 322Q852 339 845 354M885 330Q875 340 870 349M885 330Q885 341 888 358M901 335Q912 333 929 330M901 335Q895 348 888 358M901 335Q902 344 907 350M978 329Q977 340 972 349M978 329Q981 344 990 359M1010 337Q1017 333 1024 330M1010 337Q1010 348 1015 358M1047 329Q1064 333 1083 336M1047 329Q1055 338 1059 348M1083 336Q1092 331 1102 327M1083 336Q1086 343 1091 355M1102 327Q1094 341 1091 355M1123 332Q1118 340 1116 349M1159 324Q1168 326 1182 322M1159 324Q1145 335 1135 350M1182 322Q1177 341 1170 363M1182 322Q1190 333 1197 349M1198 326Q1195 339 1197 349M1198 326Q1200 345 1208 362M1230 327Q1243 331 1250 332M1230 327Q1217 345 1208 362M1230 327Q1234 346 1239 359M1250 332Q1262 330 1271 334M1271 334Q1268 347 1262 354M1296 330Q1310 326 1324 325M1324 325Q1320 335 1317 347M1324 325Q1335 344 1343 361M1353 329Q1364 330 1376 329M1353 329Q1354 339 1360 354M1376 329Q1391 327 1403 325M1376 329Q1384 339 1394 353M1403 325Q1408 338 1410 350M1455 330Q1464 344 1471 360M1483 332Q1495 330 1508 326M1483 332Q1476 348 1471 360M1508 326Q1513 338 1517 353M1531 335Q1522 346 1517 353M696 352Q700 364 704 380M712 362Q725 365 735 363M712 362Q722 375 735 385M712 362Q710 370 704 380M735 363Q752 355 771 349M735 363Q741 376 749 387M735 363Q736 376 735 385M771 349Q777 352 786 359M771 349Q778 367 781 384M771 349Q760 368 749 387M786 359Q796 353 811 349M786 359Q800 368 808 378M811 349Q811 361 808 378M845 354Q848 368 856 384M845 354Q843 370 834 386M888 358Q899 367 906 373M888 358Q885 368 882 378M972 349Q979 351 990 359M972 349Q979 364 980 382M972 349Q958 364 945 378M990 359Q1004 358 1015 358M1015 358Q1025 351 1035 348M1015 358Q1005 374 998 387M1035 348Q1033 361 1030 377M1059 348Q1073 352 1091 355M1059 348Q1066 361 1078 378M1091 355Q1104 371 1110 382M1091 355Q1082 369 1078 378M1116 349Q1125 369 1131 384M1135 350Q1150 355 1170 363M1135 350Q1150 364 1160 372M1135 350Q1131 366 1131 384M1170 363Q1185 357 1197 349M1170 363Q1165 367 1160 372M1197 349Q1202 356 1208 362M1197 349Q1188 364 1179 384M1208 362Q1223 360 1239 359M1208 362Q1212 368 1220 375M1239 359Q1244 366 1251 374M1239 359Q1228 368 1220 375M1262 354Q1266 368 1274 386M1262 354Q1258 362 1251 374M1290 354Q1280 369 1274 386M1317 347Q1310 363 1303 380M1343 361Q1353 356 1360 354M1394 353Q1405 350 1410 350M1394 353Q1387 363 1382 373M1410 350Q1409 369 1404 384M1440 347Q1442 362 1447 380M1440 347Q1433 368 1420 387M1471 360Q1470 371 1472 380M1471 360Q1458 367 1447 380M1493 361Q1505 357 1517 353M1493 361Q1499 366 1504 373M1493 361Q1484 369 1472 380M1517 353Q1525 365 1535 379M1517 353Q1509 362 1504 373M704 380Q717 382 735 385M704 380Q700 392 690 407M704 380Q709 388 713 402M735 385Q744 386 749 387M735 385Q723 395 713 402M781 384Q784 391 787 397M834 386Q846 386 856 384M856 384Q869 381 882 378M856 384Q860 396 863 411M882 378Q874 394 863 411M906 373Q914 378 925 380M925 380Q932 380 945 378M925 380Q932 396 933 411M945 378Q962 379 980 382M945 378Q941 397 933 411M945 378Q954 390 964 405M980 382Q971 393 964 405M980 382Q988 392 998 401M1030 377Q1021 394 1015 412M1055 381Q1052 392 1044 404M1055 381Q1061 394 1073 410M1078 378Q1083 387 1092 399M1110 382Q1111 396 1117 404M1131 384Q1134 393 1135 398M1160 372Q1148 386 1135 398M1160 372Q1164 384 1165 399M1179 384Q1171 394 1165 399M1220 375Q1232 391 1241 404M1251 374Q1243 390 1241 404M1251 374Q1262 392 1269 405M1274 386Q1289 384 1303 380M1274 386Q1287 397 1298 412M1335 381Q1346 381 1360 382M1360 382Q1368 377 1382 373M1360 382Q1345 395 1334 411M1360 382Q1366 397 1370 407M1382 373Q1378 391 1370 407M1404 384Q1395 390 1388 401M1420 387Q1435 386 1447 380M1472 380Q1468 391 1469 400M1504 373Q1510 394 1522 411M742 406Q754 407 762 408M742 406Q747 414 754 424M762 408Q773 404 787 397M762 408Q769 415 778 423M762 408Q759 416 754 424M787 397Q794 413 796 433M811 398Q820 402 835 409M811 398Q803 415 796 433M835 409Q849 408 863 411M835 409Q841 421 850 430M894 398Q898 418 906 435M923 412Q915 425 906 435M933 411Q948 422 957 432M933 411Q930 417 921 424M964 405Q982 401 998 401M964 405Q972 416 982 425M964 405Q962 421 957 432M1015 412Q1031 406 1044 404M1015 412Q1006 422 1001 426M1044 404Q1059 407 1073 410M1044 404Q1051 419 1055 438M1073 410Q1073 418 1075 431M1092 399Q1104 404 1117 404M1092 399Q1085 416 1075 431M1117 404Q1128 402 1135 398M1117 404Q1122 415 1126 428M1117 404Q1114 420 1106 437M1135 398Q1139 414 1146 436M1189 408Q1200 402 1214 401M1214 401Q1221 412 1230 427M1214 401Q1206 415 1204 430M1241 404Q1255 407 1269 405M1241 404Q1251 414 1257 423M1241 404Q1233 416 1230 427M1269 405Q1272 417 1273 433M1298 412Q1283 425 1273 433M1334 411Q1351 412 1370 407M1334 411Q1340 415 1349 424M1370 407Q1376 403 1388 401M1370 407Q1372 421 1375 434M1388 401Q1403 401 1418 406M1388 401Q1396 411 1400 424M1418 406Q1429 408 1441 407M1418 406Q1425 419 1431 431M1441 407Q1434 419 1431 431M1469 400Q1478 404 1486 413M1469 400Q1461 416 1459 437M1522 411Q1526 418 1525 428M695 423Q693 440 697 461M695 423Q705 439 711 453M724 429Q737 427 754 424M724 429Q715 441 711 453M754 424Q758 436 763 453M778 423Q784 430 796 433M796 433Q815 434 828 432M828 432Q838 428 850 430M828 432Q840 443 845 456M850 430Q864 431 873 427M873 427Q867 441 860 459M906 435Q907 443 907 455M921 424Q937 427 957 432M957 432Q949 441 941 456M982 425Q975 441 972 457M982 425Q986 434 995 448M1001 426Q1015 429 1032 428M1032 428Q1023 446 1016 460M1055 438Q1060 449 1069 461M1106 437Q1114 433 1126 428M1106 437Q1097 445 1083 457M1106 437Q1105 445 1109 459M1126 428Q1131 440 1142 451M1146 436Q1159 432 1171 423M1146 436Q1154 446 1161 459M1171 423Q1168 442 1161 459M1204 430Q1220 429 1230 427M1204 430Q1198 443 1190 459M1204 430Q1206 442 1213 452M1230 427Q1241 427 1257 423M1230 427Q1223 438 1213 452M1230 427Q1242 444 1247 458M1296 427Q1313 430 1331 433M1296 427Q1296 445 1294 458M1331 433Q1337 428 1349 424M1331 433Q1328 444 1322 454M1375 434Q1383 447 1395 461M1400 424Q1412 441 1422 457M1431 431Q1443 436 1459 437M1431 431Q1425 443 1422 457M1431 431Q1434 442 1440 458M1459 437Q1451 448 1440 458M1484 429Q1496 427 1507 427M1484 429Q1478 440 1470 454M697 461Q698 468 701 475M711 453Q708 467 701 475M738 453Q754 454 763 453M738 453Q741 467 749 488M785 456Q804 456 820 456M820 456Q809 470 796 482M845 456Q855 457 860 459M845 456Q846 467 845 479M845 456Q841 464 832 475M860 459Q869 476 879 487M860 459Q855 466 845 479M896 452Q888 469 879 487M907 455Q923 455 941 456M907 455Q901 464 895 474M972 457Q986 453 995 448M972 457Q976 469 979 476M972 457Q961 470 948 483M995 448Q1003 452 1016 460M995 448Q996 463 997 476M995 448Q988 462 979 476M1016 460Q1009 468 997 476M1033 448Q1050 456 1069 461M1033 448Q1043 463 1049 481M1069 461Q1078 459 1083 457M1069 461Q1076 471 1083 480M1109 459Q1129 452 1142 451M1109 459Q1124 467 1134 477M1109 459Q1102 473 1099 486M1142 451Q1146 466 1153 487M1142 451Q1137 464 1134 477M1213 452Q1230 455 1247 458M1213 452Q1225 465 1232 478M1213 452Q1204 472 1195 487M1247 458Q1257 454 1265 456M1247 458Q1248 469 1253 480M1265 456Q1280 457 1294 458M1294 458Q1311 456 1322 454M1294 458Q1281 474 1274 488M1322 454Q1331 453 1345 458M1322 454Q1312 466 1305 476M1345 458Q1356 460 1371 460M1371 460Q1383 462 1395 461M1395 461Q1411 457 1422 457M1395 461Q1396 466 1397 475M1422 457Q1434 457 1440 458M1440 458Q1457 456 1470 454M1440 458Q1447 470 1458 480M1470 454Q1475 470 1480 488M1470 454Q1466 464 1458 480M1489 449Q1504 454 1519 463M1489 449Q1484 467 1480 488M1519 463Q1510 471 1499 481M701 475Q710 491 721 510M723 479Q739 483 749 488M723 479Q729 488 733 501M749 488Q758 479 770 477M770 477Q780 481 796 482M770 477Q782 488 790 504M796 482Q816 480 832 475M796 482Q793 495 790 504M832 475Q825 489 822 506M845 479Q846 491 846 502M879 487Q889 480 895 474M922 475Q919 489 920 500M922 475Q932 491 941 505M948 483Q943 493 941 505M979 476Q968 493 960 510M979 476Q984 490 987 502M1022 484Q1015 494 1008 502M1022 484Q1033 496 1039 508M1049 481Q1053 493 1063 508M1083 480Q1093 481 1099 486M1099 486Q1088 497 1084 503M1099 486Q1105 502 1114 512M1153 487Q1165 479 1177 476M1153 487Q1149 499 1145 507M1153 487Q1156 493 1157 503M1177 476Q1184 482 1195 487M1195 487Q1216 484 1232 478M1232 478Q1241 480 1253 480M1253 480Q1245 496 1232 513M1253 480Q1263 491 1270 500M1274 488Q1283 495 1292 502M1305 476Q1313 476 1320 480M1305 476Q1296 486 1292 502M1320 480Q1319 493 1313 506M1350 485Q1368 482 1381 482M1350 485Q1360 497 1363 508M1381 482Q1390 476 1397 475M1381 482Q1371 494 1363 508M1381 482Q1381 490 1386 500M1397 475Q1413 474 1425 476M1397 475Q1411 491 1419 502M1458 480Q1453 491 1447 506M1458 480Q1462 492 1469 502M1480 488Q1491 482 1499 481M1480 488Q1474 497 1469 502M1499 481Q1511 481 1522 484M1499 481Q1507 489 1509 499M1522 484Q1514 494 1509 499M682 510Q700 510 721 510M721 510Q720 521 722 528M721 510Q714 523 705 533M733 501Q748 498 768 499M733 501Q744 515 758 531M733 501Q725 515 722 528M768 499Q767 513 771 526M768 499Q761 515 758 531M790 504Q808 505 822 506M790 504Q777 517 771 526M822 506Q836 502 846 502M822 506Q824 513 826 523M822 506Q812 518 797 524M870 504Q872 519 878 532M870 504Q866 514 859 529M897 498Q906 501 920 500M897 498Q900 518 907 535M920 500Q930 500 941 505M920 500Q920 517 926 527M960 510Q967 522 976 533M960 510Q956 515 951 522M987 502Q999 518 1010 535M1008 502Q1022 506 1039 508M1008 502Q1019 520 1030 532M1063 508Q1073 507 1084 503M1063 508Q1069 519 1075 532M1114 512Q1122 526 1128 535M1145 507Q1151 505 1157 503M1145 507Q1150 521 1158 532M1157 503Q1176 504 1193 501M1157 503Q1160 516 1158 532M1193 501Q1199 514 1209 531M1193 501Q1181 515 1172 534M1216 504Q1215 517 1209 531M1232 513Q1254 507 1270 500M1232 513Q1241 525 1247 533M1232 513Q1226 523 1225 530M1270 500Q1260 515 1247 533M1313 506Q1324 505 1337 502M1313 506Q1315 521 1323 537M1337 502Q1343 516 1355 525M1363 508Q1369 514 1371 526M1363 508Q1358 519 1355 525M1386 500Q1400 503 1419 502M1386 500Q1376 515 1371 526M1447 506Q1459 505 1469 502M1469 502Q1459 517 1450 529M1509 499Q1521 517 1528 531M1509 499Q1500 518 1497 536M722 528Q735 542 745 557M758 531Q763 528 771 526M771 526Q781 527 797 524M797 524Q791 542 787 561M797 524Q806 538 811 556M826 523Q842 523 859 529M826 523Q819 540 811 556M859 529Q869 531 878 532M859 529Q851 537 845 550M859 529Q862 539 866 548M878 532Q872 539 866 548M907 535Q917 533 926 527M951 522Q962 528 976 533M951 522Q945 535 943 552M976 533Q996 536 1010 535M976 533Q981 542 988 556M1010 535Q1022 532 1030 532M1010 535Q1002 545 988 556M1030 532Q1040 527 1045 527M1030 532Q1026 537 1020 547M1045 527Q1061 527 1075 532M1045 527Q1038 543 1035 554M1075 532Q1085 541 1091 550M1128 535Q1141 531 1158 532M1128 535Q1120 546 1115 551M1128 535Q1136 541 1141 552M1158 532Q1167 531 1172 534M1172 534Q1190 530 1209 531M1172 534Q1183 544 1193 549M1209 531Q1217 530 1225 530M1225 530Q1236 529 1247 533M1225 530Q1230 542 1240 554M1247 533Q1244 542 1240 554M1285 530Q1298 533 1306 535M1285 530Q1275 545 1267 558M1285 530Q1292 543 1294 559M1306 535Q1312 536 1323 537M1306 535Q1308 549 1315 563M1323 537Q1317 551 1315 563M1323 537Q1331 550 1345 561M1371 526Q1386 530 1404 533M1404 533Q1396 545 1391 561M1404 533Q1410 542 1415 555M1425 537Q1435 550 1439 561M1450 529Q1460 533 1471 538M1450 529Q1442 544 1439 561M1450 529Q1456 539 1462 548M1471 538Q1487 539 1497 536M1471 538Q1469 542 1462 548M1497 536Q1497 548 1494 561M1497 536Q1507 544 1519 557M691 551Q706 559 722 563M787 561Q780 570 778 578M811 556Q829 554 845 550M811 556Q818 567 828 576M811 556Q804 569 795 583M845 550Q857 552 866 548M845 550Q848 565 849 578M883 550Q898 570 909 587M923 562Q925 572 930 586M943 552Q947 571 951 585M988 556Q1007 551 1020 547M1020 547Q1026 553 1035 554M1035 554Q1048 555 1059 553M1059 553Q1073 550 1091 550M1059 553Q1072 562 1085 572M1059 553Q1050 568 1046 581M1091 550Q1095 566 1098 577M1091 550Q1088 563 1085 572M1115 551Q1130 553 1141 552M1115 551Q1107 567 1098 577M1141 552Q1152 551 1167 548M1141 552Q1131 562 1125 573M1193 549Q1206 553 1222 557M1193 549Q1182 562 1176 578M1222 557Q1230 553 1240 554M1222 557Q1222 574 1220 586M1240 554Q1245 566 1249 580M1294 559Q1298 565 1302 575M1315 563Q1331 561 1345 561M1315 563Q1322 573 1324 587M1315 563Q1309 566 1302 575M1345 561Q1336 571 1324 587M1364 554Q1372 566 1383 578M1391 561Q1386 568 1383 578M1415 555Q1423 570 1434 588M1415 555Q1411 565 1402 575M1439 561Q1444 570 1448 582M1439 561Q1438 572 1434 588M1462 548Q1476 553 1494 561M1462 548Q1466 567 1473 586M1462 548Q1453 564 1448 582M1494 561Q1508 560 1519 557M1494 561Q1481 573 1473 586M707 577Q710 587 718 599M729 573Q735 575 746 579M729 573Q726 584 718 599M729 573Q734 595 743 612M746 579Q762 577 778 578M746 579Q748 597 743 612M778 578Q789 584 795 583M778 578Q779 590 786 602M795 583Q814 582 828 576M795 583Q810 592 818 600M828 576Q837 580 849 578M849 578Q845 588 835 601M873 573Q871 594 868 610M909 587Q922 585 930 586M909 587Q897 595 888 608M909 587Q912 600 921 606M930 586Q923 595 921 606M951 585Q960 584 973 584M951 585Q961 597 972 608M973 584Q975 594 972 608M1004 586Q1015 586 1021 585M1004 586Q997 599 986 607M1004 586Q1008 602 1008 613M1021 585Q1036 584 1046 581M1021 585Q1029 597 1039 605M1046 581Q1056 590 1065 598M1085 572Q1089 577 1098 577M1098 577Q1111 577 1125 573M1098 577Q1096 590 1092 602M1098 577Q1107 594 1111 610M1125 573Q1117 590 1111 610M1125 573Q1131 590 1133 602M1176 578Q1181 592 1186 606M1204 573Q1214 579 1220 586M1204 573Q1193 589 1186 606M1204 573Q1210 593 1210 611M1220 586Q1233 580 1249 580M1249 580Q1267 583 1284 588M1249 580Q1255 596 1264 609M1284 588Q1292 581 1302 575M1284 588Q1276 596 1264 609M1302 575Q1296 593 1288 612M1324 587Q1340 581 1359 575M1324 587Q1330 597 1341 607M1359 575Q1348 592 1341 607M1359 575Q1358 589 1363 608M1434 588Q1440 588 1448 582M1448 582Q1443 593 1443 605M1448 582Q1461 592 1472 600M1473 586Q1482 590 1494 600M1495 574Q1516 575 1531 577M1495 574Q1505 589 1517 601M1531 577Q1525 589 1517 601M696 611Q698 626 702 634M718 599Q729 609 743 612M743 612Q754 604 764 598M743 612Q744 619 748 630M764 598Q773 600 786 602M786 602Q779 614 773 631M818 600Q821 615 829 633M818 600Q810 610 802 623M835 601Q849 608 868 610M868 610Q876 611 888 608M868 610Q868 618 872 624M888 608Q882 619 872 624M936 602Q931 618 926 629M972 608Q971 624 971 637M986 607Q1000 612 1008 613M986 607Q996 621 1004 631M986 607Q981 621 971 637M1008 613Q1019 618 1032 626M1008 613Q1007 623 1004 631M1039 605Q1034 615 1032 626M1133 602Q1126 618 1124 631M1169 601Q1173 615 1172 626M1169 601Q1155 619 1146 635M1186 606Q1194 618 1197 633M1210 611Q1223 623 1233 635M1248 598Q1256 602 1264 609M1248 598Q1243 613 1233 635M1264 609Q1271 620 1275 625M1264 609Q1255 618 1245 629M1288 612Q1304 606 1315 600M1288 612Q1280 617 1275 625M1315 600Q1318 616 1327 634M1315 600Q1315 613 1310 623M1341 607Q1353 607 1363 608M1363 608Q1378 606 1395 605M1363 608Q1370 622 1377 634M1363 608Q1362 618 1360 624M1395 605Q1393 614 1395 626M1415 611Q1431 611 1443 605M1415 611Q1407 618 1395 626M1472 600Q1462 613 1451 627M1494 600Q1485 610 1476 623M1517 601Q1506 622 1495 638M732 635Q739 630 748 630M732 635Q724 643 716 651M748 630Q742 647 739 662M773 631Q788 626 802 623M802 623Q816 627 829 633M802 623Q807 641 808 653M854 636Q864 628 872 624M854 636Q849 641 842 648M872 624Q884 639 896 656M926 629Q923 643 921 654M949 635Q962 634 971 637M949 635Q944 650 938 660M1004 631Q1016 628 1032 626M1047 627Q1043 641 1035 650M1047 627Q1056 642 1060 654M1070 627Q1089 628 1104 630M1124 631Q1134 635 1146 635M1124 631Q1135 640 1146 650M1146 635Q1145 641 1146 650M1146 635Q1155 644 1163 648M1197 633Q1214 635 1233 635M1197 633Q1197 645 1193 653M1233 635Q1242 630 1245 629M1233 635Q1223 640 1211 647M1233 635Q1235 643 1235 651M1310 623Q1303 635 1293 651M1310 623Q1311 637 1313 649M1327 634Q1347 628 1360 624M1327 634Q1320 645 1313 649M1327 634Q1336 644 1347 653M1360 624Q1368 627 1377 634M1360 624Q1365 640 1369 659M1377 634Q1374 644 1369 659M1395 626Q1417 625 1434 624M1395 626Q1402 642 1412 653M1434 624Q1439 624 1451 627M1434 624Q1423 638 1412 653M1434 624Q1433 643 1433 661M1451 627Q1464 625 1476 623M1476 623Q1484 633 1495 638M1476 623Q1468 641 1462 659M1476 623Q1482 638 1490 648M1495 638Q1514 636 1532 634M1495 638Q1492 641 1490 648M716 651Q727 657 739 662M716 651Q725 662 729 673M739 662Q750 658 763 652M739 662Q736 669 729 673M763 652Q782 655 798 657M763 652Q773 665 778 674M798 657Q804 652 808 653M798 657Q801 667 806 676M798 657Q788 665 778 674M808 653Q805 663 806 676M842 648Q852 653 862 658M862 658Q878 657 896 656M862 658Q869 668 874 683M896 656Q901 666 901 678M896 656Q883 668 874 683M921 654Q913 664 901 678M938 660Q951 660 963 660M938 660Q938 669 933 676M963 660Q957 671 949 678M985 653Q997 653 1010 656M985 653Q992 668 995 682M985 653Q980 665 973 673M1010 656Q1019 654 1035 650M1035 650Q1048 666 1060 677M1060 654Q1073 672 1080 687M1087 654Q1104 659 1123 658M1087 654Q1084 670 1080 687M1123 658Q1129 672 1130 687M1146 650Q1157 649 1163 648M1146 650Q1141 669 1130 687M1163 648Q1171 659 1180 673M1163 648Q1159 659 1158 676M1193 653Q1199 651 1211 647M1193 653Q1200 664 1201 678M1193 653Q1187 662 1180 673M1211 647Q1218 660 1220 678M1211 647Q1209 664 1201 678M1235 651Q1250 656 1263 662M1235 651Q1228 666 1220 678M1263 662Q1269 669 1274 675M1293 651Q1305 653 1313 649M1293 651Q1297 668 1301 680M1347 653Q1334 665 1322 683M1397 647Q1385 666 1375 679M1412 653Q1425 659 1433 661M1412 653Q1420 668 1431 681M1433 661Q1448 658 1462 659M1462 659Q1476 651 1490 648M1490 648Q1496 662 1496 678M695 674Q711 675 729 673M695 674Q693 692 691 705M695 674Q702 689 712 701M729 673Q741 675 749 679M749 679Q764 676 778 674M749 679Q743 690 732 703M778 674Q795 678 806 676M778 674Q783 691 786 708M806 676Q817 677 831 683M831 683Q837 696 842 712M847 675Q846 693 842 712M847 675Q852 688 863 706M874 683Q885 680 901 678M874 683Q871 692 863 706M901 678Q919 676 933 676M901 678Q900 693 897 709M901 678Q907 694 917 707M933 676Q938 689 939 704M949 678Q943 693 939 704M949 678Q955 696 961 710M973 673Q986 678 995 682M973 673Q969 692 961 710M973 673Q988 685 996 703M1029 685Q1046 678 1060 677M1060 677Q1072 683 1080 687M1080 687Q1087 685 1098 683M1080 687Q1089 695 1098 699M1098 683Q1116 684 1130 687M1098 683Q1099 692 1098 699M1098 683Q1102 691 1110 701M1180 673Q1188 678 1201 678M1180 673Q1168 689 1157 706M1201 678Q1192 689 1188 701M1220 678Q1236 676 1250 680M1220 678Q1220 692 1215 707M1220 678Q1229 695 1241 707M1250 680Q1244 693 1241 707M1301 680Q1302 689 1298 702M1322 683Q1332 679 1348 673M1322 683Q1320 695 1313 711M1348 673Q1359 675 1375 679M1348 673Q1344 693 1337 708M1375 679Q1384 679 1397 681M1375 679Q1370 695 1368 708M1375 679Q1386 692 1397 710M1397 681Q1413 681 1431 681M1431 681Q1446 675 1456 672M1431 681Q1421 696 1410 707M1456 672Q1462 688 1463 702M1496 678Q1511 679 1520 680M1496 678Q1503 690 1511 701M712 701Q724 702 732 703M712 701Q718 715 728 724M732 703Q729 712 728 724M771 706Q778 706 786 708M771 706Q769 717 771 733M786 708Q791 718 796 729M786 708Q777 722 771 733M863 706Q871 714 883 723M897 709Q900 717 899 730M917 707Q927 704 939 704M939 704Q933 713 932 728M961 710Q977 705 996 703M961 710Q973 718 981 727M961 710Q960 716 956 726M996 703Q998 721 1000 734M1022 698Q1029 701 1034 705M1022 698Q1028 718 1033 735M1062 703Q1056 718 1054 729M1098 699Q1101 701 1110 701M1098 699Q1101 720 1108 735M1098 699Q1091 714 1081 732M1110 701Q1116 715 1122 728M1143 701Q1151 701 1157 706M1143 701Q1151 711 1155 726M1143 701Q1130 715 1122 728M1157 706Q1172 706 1188 701M1157 706Q1165 711 1172 722M1157 706Q1154 716 1155 726M1188 701Q1200 702 1215 707M1215 707Q1227 706 1241 707M1241 707Q1251 709 1266 710M1241 707Q1249 716 1256 729M1241 707Q1235 718 1235 724M1266 710Q1272 720 1280 728M1266 710Q1263 717 1256 729M1298 702Q1291 716 1280 728M1313 711Q1326 707 1337 708M1337 708Q1339 718 1346 723M1368 708Q1385 711 1397 710M1368 708Q1373 718 1374 734M1368 708Q1356 714 1346 723M1397 710Q1401 711 1410 707M1397 710Q1405 716 1410 724M1410 707Q1419 715 1425 722M1410 707Q1408 717 1410 724M1440 706Q1449 718 1453 730M1463 702Q1478 704 1494 706M1463 702Q1472 717 1475 727M1494 706Q1502 723 1507 735M1494 706Q1485 717 1475 727M1511 701Q1515 713 1524 728M700 725Q709 739 723 753M728 724Q735 723 746 723M728 724Q733 740 743 756M746 723Q745 740 743 756M771 733Q778 740 785 749M796 729Q812 731 832 730M796 729Q808 743 822 751M832 730Q838 741 840 749M847 736Q843 740 840 749M847 736Q856 739 862 747M883 723Q890 729 899 730M883 723Q872 735 862 747M883 723Q888 733 891 749M899 730Q914 732 932 728M899 730Q894 739 891 749M899 730Q906 740 917 751M932 728Q923 737 917 751M956 726Q967 729 981 727M981 727Q992 732 1000 734M981 727Q971 741 963 751M981 727Q980 741 983 748M1000 734Q1014 736 1033 735M1033 735Q1040 730 1054 729M1054 729Q1068 731 1081 732M1054 729Q1046 738 1033 750M1054 729Q1061 746 1065 763M1081 732Q1074 745 1065 763M1155 726Q1161 727 1172 722M1155 726Q1147 740 1145 753M1172 722Q1186 727 1204 737M1172 722Q1164 738 1158 756M1172 722Q1185 743 1193 757M1204 737Q1199 745 1193 757M1204 737Q1208 748 1211 762M1235 724Q1225 745 1211 762M1256 729Q1265 730 1280 728M1256 729Q1261 746 1264 760M1280 728Q1270 742 1264 760M1309 738Q1316 734 1320 733M1309 738Q1308 744 1307 750M1320 733Q1316 739 1307 750M1320 733Q1328 738 1334 748M1346 723Q1356 742 1363 759M1374 734Q1368 749 1363 759M1374 734Q1383 744 1387 755M1410 724Q1420 725 1425 722M1410 724Q1400 743 1387 755M1410 724Q1409 738 1407 750M1425 722Q1415 734 1407 750M1453 730Q1466 726 1475 727M1453 730Q1462 747 1465 760M1475 727Q1489 729 1507 735M1475 727Q1473 745 1465 760M1475 727Q1482 743 1495 759M1507 735Q1516 734 1524 728M1507 735Q1513 747 1513 760M1524 728Q1517 742 1513 760M692 759Q706 757 723 753M692 759Q698 769 708 784M723 753Q735 754 743 756M723 753Q727 766 735 774M723 753Q717 766 708 784M743 756Q756 752 770 749M770 749Q774 761 781 776M770 749Q764 762 760 778M785 749Q801 747 822 751M822 751Q826 763 829 776M822 751Q817 760 809 772M840 749Q848 747 862 747M840 749Q836 762 829 776M862 747Q876 748 891 749M862 747Q871 763 880 785M862 747Q854 762 851 778M917 751Q920 766 925 776M917 751Q908 764 900 782M963 751Q975 751 983 748M963 751Q963 764 959 777M983 748Q977 762 971 777M1021 752Q1013 763 1006 775M1065 763Q1060 770 1055 775M1085 761Q1081 770 1071 774M1115 754Q1106 765 1100 779M1145 753Q1135 769 1120 780M1158 756Q1172 759 1193 757M1158 756Q1170 774 1178 787M1158 756Q1152 769 1151 777M1193 757Q1196 769 1198 786M1246 763Q1253 762 1264 760M1264 760Q1268 772 1276 787M1264 760Q1255 777 1246 788M1294 750Q1299 751 1307 750M1294 750Q1284 768 1276 787M1307 750Q1318 749 1334 748M1307 750Q1318 764 1331 775M1307 750Q1303 765 1298 779M1363 759Q1376 754 1387 755M1363 759Q1372 766 1385 777M1363 759Q1354 773 1349 783M1407 750Q1402 762 1397 778M1447 747Q1459 752 1465 760M1447 747Q1451 764 1455 778M1447 747Q1441 761 1435 774M1465 760Q1475 768 1480 775M1495 759Q1505 756 1513 760M1495 759Q1500 771 1504 786M708 784Q711 797 709 810M735 774Q747 776 760 778M735 774Q722 789 709 810M760 778Q752 792 743 804M760 778Q766 791 768 804M809 772Q820 777 829 776M809 772Q812 786 817 806M880 785Q886 797 891 807M900 782Q913 782 925 776M900 782Q897 796 891 807M959 777Q965 778 971 777M959 777Q951 795 939 813M959 777Q964 791 969 802M1006 775Q1016 776 1031 781M1006 775Q1000 792 994 813M1006 775Q1011 793 1013 811M1031 781Q1022 794 1013 811M1031 781Q1033 795 1034 813M1055 775Q1062 776 1071 774M1055 775Q1059 791 1065 801M1100 779Q1101 795 1095 807M1100 779Q1114 795 1122 810M1120 780Q1135 777 1151 777M1120 780Q1130 795 1145 805M1151 777Q1163 783 1178 787M1151 777Q1148 791 1145 805M1151 777Q1165 789 1173 798M1178 787Q1190 788 1198 786M1198 786Q1210 783 1225 784M1246 788Q1241 800 1239 806M1246 788Q1257 796 1271 800M1276 787Q1285 783 1298 779M1276 787Q1273 791 1271 800M1298 779Q1313 774 1331 775M1298 779Q1303 789 1308 806M1331 775Q1322 789 1308 806M1331 775Q1340 787 1345 805M1349 783Q1367 779 1385 777M1349 783Q1347 791 1345 805M1349 783Q1354 796 1361 810M1385 777Q1392 777 1397 778M1435 774Q1442 787 1445 799M1455 778Q1469 777 1480 775M1455 778Q1459 791 1463 799M1480 775Q1481 790 1483 803M1504 786Q1495 795 1483 803M1533 782Q1526 795 1521 810M690 806Q692 814 696 825M709 810Q700 819 696 825M768 804Q771 823 771 838M768 804Q760 823 754 836M817 806Q831 804 840 798M817 806Q828 822 834 834M840 798Q842 817 848 833M840 798Q836 817 834 834M867 804Q871 814 876 822M891 807Q894 815 900 827M922 799Q927 814 930 826M939 813Q944 823 954 833M994 813Q1006 811 1013 811M1013 811Q1021 809 1034 813M1013 811Q1010 819 1006 829M1034 813Q1045 824 1060 832M1034 813Q1025 819 1022 824M1095 807Q1101 821 1110 833M1122 810Q1127 816 1131 828M1145 805Q1159 803 1173 798M1173 798Q1173 815 1172 832M1173 798Q1162 813 1149 829M1196 808Q1205 810 1211 810M1211 810Q1219 820 1226 829M1239 806Q1243 824 1253 837M1271 800Q1279 803 1286 807M1271 800Q1274 818 1275 833M1286 807Q1297 806 1308 806M1308 806Q1305 816 1298 831M1345 805Q1354 805 1361 810M1361 810Q1379 809 1396 809M1361 810Q1369 822 1380 829M1416 811Q1424 820 1431 832M1416 811Q1415 817 1409 828M1445 799Q1456 798 1463 799M1445 799Q1436 815 1431 832M1483 803Q1495 817 1502 837M1483 803Q1478 812 1476 827M1521 810Q1525 825 1524 833M1521 810Q1514 825 1502 837M696 825Q712 828 726 836M696 825Q696 836 693 851M696 825Q702 836 714 849M726 836Q738 834 754 836M726 836Q717 845 714 849M726 836Q735 841 746 851M754 836Q748 843 746 851M771 838Q768 843 764 852M798 832Q799 844 795 861M798 832Q806 844 816 856M834 834Q841 832 848 833M834 834Q823 846 816 856M834 834Q834 848 834 861M848 833Q860 827 876 822M876 822Q889 823 900 827M900 827Q894 844 888 859M930 826Q925 838 918 853M954 833Q963 831 972 824M954 833Q948 848 946 862M1006 829Q998 840 990 853M1006 829Q1010 844 1014 852M1022 824Q1042 829 1060 832M1022 824Q1018 841 1014 852M1060 832Q1070 829 1075 825M1075 825Q1074 843 1073 863M1110 833Q1124 829 1131 828M1110 833Q1105 842 1098 853M1131 828Q1143 826 1149 829M1149 829Q1154 839 1158 854M1172 832Q1180 842 1188 857M1201 835Q1207 851 1210 863M1226 829Q1242 832 1253 837M1226 829Q1216 848 1210 863M1226 829Q1233 841 1235 853M1253 837Q1266 834 1275 833M1253 837Q1241 844 1235 853M1253 837Q1256 846 1259 853M1275 833Q1284 835 1298 831M1275 833Q1269 846 1259 853M1298 831Q1294 840 1294 848M1324 836Q1318 845 1310 857M1324 836Q1332 850 1342 859M1349 836Q1364 830 1380 829M1349 836Q1357 846 1361 860M1380 829Q1392 828 1409 828M1380 829Q1386 846 1394 859M1409 828Q1422 833 1431 832M1409 828Q1411 843 1409 854M1431 832Q1433 847 1432 861M1452 823Q1466 823 1476 827M1452 823Q1443 844 1432 861M1476 827Q1474 844 1472 861M1476 827Q1477 839 1482 853M1502 837Q1494 847 1482 853M693 851Q695 870 696 885M714 849Q729 848 746 851M764 852Q754 870 746 881M795 861Q796 869 803 877M795 861Q783 865 772 873M816 856Q823 857 834 861M816 856Q822 864 832 876M834 861Q848 857 858 853M834 861Q844 866 851 873M834 861Q830 867 832 876M858 853Q865 867 873 879M858 853Q853 865 851 873M888 859Q898 868 903 879M888 859Q882 871 873 879M918 853Q935 856 946 862M918 853Q925 863 933 874M946 862Q954 858 957 857M946 862Q953 871 958 874M946 862Q939 868 933 874M957 857Q974 858 990 853M957 857Q973 871 985 880M957 857Q957 864 958 874M990 853Q986 869 985 880M1014 852Q1029 856 1043 857M1014 852Q1008 866 1001 882M1073 863Q1071 875 1072 885M1098 853Q1099 866 1106 883M1098 853Q1085 868 1072 885M1120 857Q1134 858 1143 863M1120 857Q1123 870 1122 880M1120 857Q1116 870 1106 883M1143 863Q1145 871 1145 874M1143 863Q1133 872 1122 880M1158 854Q1149 864 1145 874M1188 857Q1199 863 1210 863M1188 857Q1195 873 1205 886M1210 863Q1217 870 1220 879M1235 853Q1240 864 1246 876M1235 853Q1228 867 1220 879M1259 853Q1277 853 1294 848M1259 853Q1264 869 1271 887M1294 848Q1300 852 1310 857M1310 857Q1319 869 1330 886M1342 859Q1354 858 1361 860M1342 859Q1349 869 1360 881M1361 860Q1367 872 1378 886M1394 859Q1404 859 1409 854M1394 859Q1394 870 1401 877M1394 859Q1387 873 1378 886M1409 854Q1421 855 1432 861M1432 861Q1451 863 1472 861M1432 861Q1439 872 1450 879M1472 861Q1472 867 1477 878M1472 861Q1460 873 1450 879M1482 853Q1491 866 1501 879M1482 853Q1477 863 1477 878M1516 856Q1515 873 1520 885M696 885Q710 883 724 880M696 885Q709 897 716 903M724 880Q736 883 746 881M724 880Q723 892 716 903M746 881Q758 878 772 873M746 881Q744 889 736 899M772 873Q768 889 763 902M803 877Q816 877 832 876M803 877Q796 889 790 901M832 876Q840 872 851 873M832 876Q835 888 832 904M851 873Q864 875 873 879M851 873Q840 889 832 904M851 873Q864 883 872 897M873 879Q888 878 903 879M873 879Q870 888 872 897M903 879Q921 877 933 874M903 879Q897 895 891 912M903 879Q908 893 913 907M933 874Q920 893 913 907M933 874Q937 890 938 902M958 874Q970 879 985 880M958 874Q948 885 938 902M985 880Q991 879 1001 882M1001 882Q1016 884 1033 887M1001 882Q993 896 987 905M1001 882Q1007 896 1015 909M1033 887Q1026 898 1015 909M1033 887Q1036 891 1033 898M1051 872Q1058 888 1061 901M1072 885Q1092 882 1106 883M1106 883Q1114 893 1121 903M1145 874Q1142 893 1137 908M1174 887Q1190 884 1205 886M1205 886Q1213 881 1220 879M1246 876Q1249 895 1258 909M1271 887Q1278 895 1283 907M1300 880Q1317 886 1330 886M1300 880Q1293 895 1283 907M1330 886Q1344 885 1360 881M1330 886Q1321 899 1316 912M1330 886Q1335 890 1342 897M1360 881Q1366 883 1378 886M1360 881Q1349 887 1342 897M1360 881Q1363 894 1372 909M1378 886Q1391 879 1401 877M1378 886Q1373 899 1372 909M1401 877Q1394 885 1391 897M1431 876Q1442 879 1450 879M1431 876Q1437 894 1443 913M1450 879Q1448 895 1443 913M1477 878Q1474 886 1472 898M1501 879Q1510 882 1520 885M1501 879Q1511 889 1519 903M1520 885Q1519 892 1519 903M716 903Q728 902 736 899M819 905Q826 903 832 904M832 904Q853 902 872 897M938 902Q953 902 967 906M1015 909Q1023 906 1033 898M1033 898Q1044 901 1061 901M1061 901Q1076 905 1095 904M1095 904Q1106 904 1121 903M1121 903Q1128 905 1137 908M1195 902Q1206 909 1212 910M1245 907Q1253 910 1258 909M1342 897Q1360 905 1372 909M1372 909Q1382 901 1391 897M1391 897Q1406 898 1419 904M1419 904Q1432 909 1443 913M1472 898Q1482 899 1495 904" stroke="#f3a58f" stroke-width=".75" opacity=".3"/>
<path d="M1112.0 369.0A9 7.6 0 1 1 1130.0 369.0A9 7.6 0 1 1 1112.0 369.0M1121.0 369.0L1140.1 366.0M1121.0 369.0L1134.5 383.5M1121.0 369.0L1116.6 383.3M1121.0 369.0L1104.8 383.8M1121.0 369.0L1105.3 364.1M1121.0 369.0L1122.4 350.4M1121.0 369.0L1135.3 357.0M1231.0 577.0A5 4.2 0 1 1 1241.0 577.0A5 4.2 0 1 1 1231.0 577.0M1236.0 577.0L1244.7 577.7M1236.0 577.0L1238.9 589.0M1236.0 577.0L1226.4 583.7M1236.0 577.0L1229.8 571.4M1236.0 577.0L1241.0 567.2M1148.0 242.0A5 4.2 0 1 1 1158.0 242.0A5 4.2 0 1 1 1148.0 242.0M1153.0 242.0L1161.1 241.0M1153.0 242.0L1154.0 252.3M1153.0 242.0L1142.1 247.9M1153.0 242.0L1143.8 233.3M1153.0 242.0L1156.0 230.4M1108.0 852.0A5 4.2 0 1 1 1118.0 852.0A5 4.2 0 1 1 1108.0 852.0M1113.0 852.0L1125.7 851.6M1113.0 852.0L1113.7 860.5M1113.0 852.0L1107.0 858.8M1113.0 852.0L1106.7 844.0M1113.0 852.0L1116.6 843.2M840.0 907.0A8 6.8 0 1 1 856.0 907.0A8 6.8 0 1 1 840.0 907.0M848.0 907.0L863.9 907.1M848.0 907.0L858.1 921.3M848.0 907.0L837.1 923.8M848.0 907.0L827.9 904.8M848.0 907.0L841.7 887.3M848.0 907.0L856.3 895.6M1254.0 733.0A4 3.4 0 1 1 1262.0 733.0A4 3.4 0 1 1 1254.0 733.0M1258.0 733.0L1268.0 735.2M1258.0 733.0L1255.9 741.4M1258.0 733.0L1250.8 732.1M1258.0 733.0L1259.7 724.5M1076.0 715.0A4 3.4 0 1 1 1084.0 715.0A4 3.4 0 1 1 1076.0 715.0M1080.0 715.0L1086.6 714.1M1080.0 715.0L1081.1 725.3M1080.0 715.0L1073.8 722.4M1080.0 715.0L1074.1 711.2M1080.0 715.0L1081.8 705.7M984.0 636.0A4 3.4 0 1 1 992.0 636.0A4 3.4 0 1 1 984.0 636.0M988.0 636.0L994.4 637.5M988.0 636.0L989.6 642.4M988.0 636.0L981.2 639.7M988.0 636.0L981.2 628.2M988.0 636.0L991.2 626.1M1422.0 588.0A8 6.8 0 1 1 1438.0 588.0A8 6.8 0 1 1 1422.0 588.0M1430.0 588.0L1443.3 586.5M1430.0 588.0L1435.8 599.7M1430.0 588.0L1424.6 603.1M1430.0 588.0L1416.0 587.1M1430.0 588.0L1415.9 574.2M1430.0 588.0L1438.2 569.2M1350.0 622.0A5 4.2 0 1 1 1360.0 622.0A5 4.2 0 1 1 1350.0 622.0M1355.0 622.0L1364.6 624.3M1355.0 622.0L1358.5 632.0M1355.0 622.0L1345.6 627.7M1355.0 622.0L1346.3 615.2M1355.0 622.0L1360.8 613.2M1418.0 663.0A3 2.5 0 1 1 1424.0 663.0A3 2.5 0 1 1 1418.0 663.0M1421.0 663.0L1428.0 662.7M1421.0 663.0L1421.9 668.6M1421.0 663.0L1414.9 661.2M1421.0 663.0L1421.1 658.2M935.0 478.0A3 2.5 0 1 1 941.0 478.0A3 2.5 0 1 1 935.0 478.0M938.0 478.0L944.5 477.7M938.0 478.0L939.9 484.4M938.0 478.0L933.0 477.6M938.0 478.0L938.5 471.8M934.0 420.0A3 2.5 0 1 1 940.0 420.0A3 2.5 0 1 1 934.0 420.0M937.0 420.0L942.8 420.6M937.0 420.0L936.1 427.0M937.0 420.0L932.2 421.4M937.0 420.0L937.8 412.4M1399.0 468.0A4 3.4 0 1 1 1407.0 468.0A4 3.4 0 1 1 1399.0 468.0M1403.0 468.0L1411.1 466.8M1403.0 468.0L1405.0 475.4M1403.0 468.0L1397.2 473.0M1403.0 468.0L1395.5 463.4M1403.0 468.0L1404.5 460.2M877.0 736.0A3 2.5 0 1 1 883.0 736.0A3 2.5 0 1 1 877.0 736.0M880.0 736.0L884.8 736.8M880.0 736.0L879.7 743.0M880.0 736.0L874.6 736.6M880.0 736.0L881.0 730.6M970.0 836.0A4 3.4 0 1 1 978.0 836.0A4 3.4 0 1 1 970.0 836.0M974.0 836.0L982.0 834.5M974.0 836.0L973.2 842.8M974.0 836.0L966.3 836.8M974.0 836.0L975.6 828.0M1335.0 232.0A5 4.2 0 1 1 1345.0 232.0A5 4.2 0 1 1 1335.0 232.0M1340.0 232.0L1348.6 233.9M1340.0 232.0L1344.5 242.3M1340.0 232.0L1330.5 236.0M1340.0 232.0L1332.3 228.2M1340.0 232.0L1342.9 223.5M1316.0 213.0A6 5.1 0 1 1 1328.0 213.0A6 5.1 0 1 1 1316.0 213.0M1322.0 213.0L1336.4 215.7M1322.0 213.0L1327.4 222.9M1322.0 213.0L1309.9 218.8M1322.0 213.0L1314.0 204.5M1322.0 213.0L1323.0 201.7M1286.0 228.0A4 3.4 0 1 1 1294.0 228.0A4 3.4 0 1 1 1286.0 228.0M1290.0 228.0L1297.4 229.3M1290.0 228.0L1290.7 236.0M1290.0 228.0L1282.0 228.4M1290.0 228.0L1291.8 221.2" stroke="#ec9fb0" stroke-width=".9" opacity=".8"/>
<g stroke="#b3a0bf" stroke-width=".95" opacity=".6">
<polyline points="1076.5,284.5 1082,292 1088,300 1090,310 1086,322 1090,335 1088,345 1096,352 1110,348 1125,350 1140,345 1152,352 1162,360 1172,372 1185,380 1180,392 1170,398"/>
<polyline points="1088,345 1078,352 1070,362 1060,370 1052,382 1058,392 1070,398 1085,400 1100,398 1112,404 1125,400 1140,404 1155,400 1170,398 1182,404 1192,412 1205,410"/>
<polyline points="947,381.5 955,388 962,396 968,408 966,420 962,432 958,445 950,452 940,458 930,462 920,470 914,477"/>
<polyline points="966,420 978,418 992,412 1005,405 1018,398 1030,392 1042,388 1052,382"/>
<polyline points="1030,392 1036,405 1044,415 1050,430 1046,445 1040,458 1030,468 1018,476 1008,488 1000,500 990,508 978,512 966,516 955,520 940,532"/>
<polyline points="1018,476 1030,480 1044,484 1058,490 1070,500 1082,512 1095,520 1110,524 1125,518 1140,512 1155,508 1168,500 1180,490 1192,480 1200,468 1205,455 1200,440 1205,425 1205,410"/>
<polyline points="1110,524 1115,540 1112,555 1120,568 1118,582 1110,595 1105,610 1110,625 1100,640 1095,655 1085,665 1070,672 1055,680 1040,690 1025,700 1012,712 1000,725 990,740 985,747"/>
<polyline points="1110,625 1125,630 1140,640 1155,650 1170,655 1185,660 1200,668 1215,675 1225,685 1230,700 1222,712 1214,723"/>
<polyline points="1225,685 1240,680 1255,672 1270,668 1285,660 1300,650 1315,640 1328,652"/>
<polyline points="1192,480 1205,492 1215,505 1228,515 1240,525 1255,530 1270,526 1285,535"/>
<polyline points="1240,525 1232,540 1222,552 1210,560 1198,555 1185,560 1170,555 1155,548 1140,545 1125,548 1115,540"/>
<polyline points="698,768 715,764 735,760 755,756 775,752 795,755 815,758 830,750 842,742 850,730"/>
<polyline points="880,736 872,748 876,760 888,768 900,762 912,770 925,778 938,772 950,780 960,790 965,805 958,818 948,825 940,838 930,850 918,860 905,870 895,885 890,900 888,909"/>
<polyline points="960,790 972,780 985,770 998,760"/>
<polyline points="1038,770 1035,790 1030,810 1025,830 1022,850 1020,870 1024,890 1030,909"/>
</g>
<g stroke="#ec9fb0" stroke-width="1.3" opacity=".9">
<polyline points="1121,369 1126,350 1130,330 1136,308 1140,290 1146,268 1150,250 1153,242"/>
<polyline points="1097,222 1108,238 1120,255 1135,272 1150,290 1165,305 1180,320 1197,340"/>
<polyline points="1121,369 1112,345 1105,320 1100,300 1095,285 1092,265 1090,250 1090,235 1097,222 1110,218 1122,214"/>
<polyline points="1121,369 1105,360 1090,350 1076,338 1064,328 1052,326 1040,326 1030,328 1019,324"/>
<polyline points="1040,326 1022,336 1002,340 985,342"/>
<polyline points="1121,369 1140,362 1160,355 1180,346 1197,340 1215,338 1230,335"/>
<polyline points="1121,369 1130,385 1140,400 1155,415 1170,430 1188,444 1205,455 1220,465 1235,475 1234,498 1232,520 1234,540 1236,560 1236,577"/>
<polyline points="1121,369 1112,390 1105,410 1100,426 1095,440 1078,450 1060,460 1048,466 1035,470 1032,486 1030,500 1029,522 1020,540 1010,560 1002,580 995,600 990,618 988,636"/>
<polyline points="1108,388 1085,398 1060,410 1040,420 1022,428 1010,440 1000,450 989,463 975,468 960,472 938,478"/>
<polyline points="1022,428 1000,427 980,425 958,422 937,420"/>
<polyline points="937,420 918,412 900,405 880,399 860,395 845,396 830,398 810,401"/>
<polyline points="938,478 925,472 910,465 898,458 885,452 872,446 860,440 848,436 835,430 826,422 820,415 810,401"/>
<polyline points="937,420 944,405 950,390 958,375 965,360 975,350 985,342"/>
<polyline points="937,420 938,440 938,460 938,478 944,495 950,510 962,524 975,535 988,541 1000,545 1015,550"/>
<polyline points="1095,440 1097,460 1098,480 1092,505 1085,530 1078,552 1072,572 1071,595 1070,620 1072,645 1075,670 1078,692 1080,715"/>
<polyline points="1098,480 1112,500 1125,520 1136,538 1145,555 1154,575"/>
<polyline points="1154,575 1156,598 1160,620 1163,645 1165,670 1170,686 1175,700 1191,715"/>
<polyline points="988,636 1010,630 1030,625 1052,618 1075,610 1095,600 1115,590 1132,582 1154,575 1172,578 1195,580 1215,582 1236,577"/>
<polyline points="988,636 998,650 1010,665 1025,680 1040,695 1060,706 1080,715"/>
<polyline points="988,636 982,658 975,680 968,698 960,715 952,724 945,728 935,730 924,731"/>
<polyline points="948,722 970,728 996,733 1018,735 1040,735 1060,726 1080,715"/>
<polyline points="1080,715 1095,726 1110,735 1125,740 1140,742 1160,738"/>
<polyline points="1142,815 1146,802 1148,790 1146,771 1150,758 1155,745 1165,735 1175,728 1191,715 1203,710 1215,705 1230,695"/>
<polyline points="1236,577 1234,600 1232,620 1229,640 1228,660 1228,678 1230,695 1234,706 1240,715 1248,725 1258,733"/>
<polyline points="1250,722 1270,724 1290,725 1305,722 1320,718 1334,713 1345,708 1355,704 1365,700 1378,692 1390,683 1405,672 1421,663"/>
<polyline points="1236,577 1250,587 1262,590 1272,594 1280,598 1275,612"/>
<polyline points="1280,598 1286,592 1290,586 1292,565 1293,540"/>
<polyline points="1235,545 1250,546 1265,545 1280,543 1293,540"/>
<polyline points="1235,485 1250,484 1265,482 1290,479 1308,470 1325,462 1340,456 1352,452"/>
<polyline points="1240,470 1250,490 1255,510 1253,528 1250,545"/>
<polyline points="1275,612 1265,640 1250,665 1240,685 1230,695"/>
<polyline points="1275,612 1290,640 1300,665 1295,690 1290,725"/>
<polyline points="1154,575 1175,560 1200,550 1220,548 1235,545"/>
<polyline points="1072,572 1050,560 1029,522"/>
<polyline points="1035,470 1060,478 1098,480"/>
<polyline points="1035,470 1010,466 989,463"/>
<polyline points="1064,328 1050,360 1035,395 1022,428"/>
<polyline points="1095,440 1130,430 1170,430"/>
<polyline points="924,731 912,734 900,735 890,737 880,736 870,733 860,730 850,726 841,723 820,727 800,728 780,725 760,722 740,720 720,722 698,725"/>
<polyline points="880,736 888,750 895,765 908,778 920,790 935,802 950,815 962,826 974,836"/>
<polyline points="924,731 915,744 905,755 895,764 885,770 875,778 865,785 846,793 848,816 850,840 855,860 860,880 868,909"/>
<polyline points="846,793 826,804 808,813 803,824 799,835 788,848 775,860 765,874 755,886 748,909"/>
<polyline points="761,777 780,784 800,790 822,792 846,793"/>
<polyline points="761,777 760,750 758,720"/>
<polyline points="761,777 755,803 750,830 747,850 745,870 755,886"/>
<polyline points="799,835 785,828 770,820 750,810 730,800 698,790"/>
<polyline points="974,836 992,838 1010,838 1026,838 1043,838 1060,844 1075,850 1088,853 1100,855 1113,852"/>
<polyline points="974,836 958,848 940,860 922,873 905,885 880,893 870,901 860,909"/>
<polyline points="1142,815 1136,826 1130,835 1122,844 1113,852 1100,858 1085,863 1074,866 1064,868 1054,882 1045,895 1035,909"/>
<polyline points="974,836 980,818 985,800 990,788 995,775"/>
<polyline points="974,836 972,858 970,880 975,909"/>
<polyline points="924,731 930,746 935,760 942,770 950,780 955,795 960,810 974,836"/>
<polyline points="1043,838 1050,820 1062,800 1070,785"/>
<polyline points="1113,852 1105,830 1095,810 1090,790"/>
<polyline points="808,813 840,830 880,893"/>
<polyline points="799,835 820,870 840,909"/>
<polyline points="1421,663 1434,668 1445,675 1454,680 1461,683 1472,692 1480,700 1485,715 1490,730 1493,745 1495,760"/>
<polyline points="1421,663 1420,652 1420,640 1422,625 1425,610 1428,598 1430,585"/>
<polyline points="1415,663 1410,648 1406,631 1405,614 1405,597"/>
<polyline points="1355,625 1368,630 1380,632 1393,632 1406,631 1418,630 1430,628 1442,626 1455,622 1470,616 1485,610 1498,604 1510,600 1523,597"/>
<polyline points="1355,620 1368,612 1380,605 1392,600 1405,597 1418,592 1430,588 1445,589 1460,590 1475,591 1490,592 1523,595"/>
<polyline points="1432,590 1444,606 1455,622 1470,630 1484,638 1498,645 1510,650 1523,655"/>
<polyline points="1355,625 1358,638 1362,650 1370,665 1380,680 1392,685"/>
<polyline points="1355,622 1345,621 1335,620 1328,616 1320,612 1310,608 1300,605 1288,606 1275,612"/>
<polyline points="1484,638 1480,650 1475,660 1468,672 1461,683"/>
<polyline points="1360,612 1355,600 1350,590 1340,587 1330,585"/>
<polyline points="1430,585 1445,575 1460,568 1480,570 1500,575 1523,578"/>
<polyline points="1480,700 1500,705 1523,700"/>
<polyline points="1293,540 1304,530 1315,523 1325,514 1335,505 1345,498 1355,490 1368,482 1380,475 1392,470 1403,465 1414,461 1425,458 1445,462 1470,470"/>
<polyline points="1359,449 1367,460 1375,470 1382,480 1390,490 1400,505 1410,520 1418,535 1425,550 1428,562 1432,575"/>
<polyline points="1359,449 1370,452 1380,455 1392,460 1403,465"/>
<polyline points="1403,465 1420,480 1440,500 1455,520 1460,545"/>
<polyline points="1290,225 1300,221 1310,218 1322,211"/>
<polyline points="1322,211 1330,220 1337,228 1342,242 1345,256"/>
<polyline points="1337,228 1348,232 1360,235 1380,238 1400,240 1420,242 1440,245 1465,248 1490,250 1523,255"/>
<polyline points="1378,218 1390,230 1400,240"/>
<polyline points="1400,209 1410,220 1420,230 1440,245"/>
<polyline points="1460,209 1470,222 1480,235 1490,250"/>
<polyline points="1153,242 1165,246 1175,250 1185,254 1194,256 1210,254 1225,250 1242,243 1260,235 1275,230 1290,225"/>
<polyline points="1153,242 1162,233 1170,225 1180,218 1190,212 1200,209"/>
<polyline points="1194,256 1205,243 1215,230 1222,220 1230,209"/>
<polyline points="1260,235 1250,222 1245,209"/>
<polyline points="1345,256 1380,258 1420,256 1460,258"/>
<polyline points="1440,245 1445,258"/>
<polyline points="1490,250 1495,300 1500,350 1498,400 1495,440"/>
<polyline points="1425,458 1445,445 1470,440 1495,440 1523,435"/>
<polyline points="853,237 847,243 840,248 832,255 825,262 815,266 805,270 795,274 785,277 775,280 765,282"/>
<polyline points="853,237 862,230 870,225 876,216 880,209"/>
<polyline points="950,224 943,226 935,228 925,232 915,235 905,236 895,236 882,237 870,238 853,237"/>
<polyline points="950,224 957,228 964,230 975,229 985,228 996,229 1008,230 1020,230 1030,230 1040,226 1050,222"/>
<polyline points="950,224 955,216 960,209"/>
<polyline points="1008,230 1009,220 1010,209"/>
<polyline points="1050,222 1055,217 1060,212"/>
<polyline points="905,236 900,222 898,209"/>
<polyline points="1030,230 1035,218 1040,209"/>
<polyline points="985,228 980,218 982,209"/>
</g>
<g stroke="#ad99bb" stroke-width="2.4" opacity=".8">
<polyline points="1129.5,209 1133,218 1135,224 1141,226 1148,230 1154,229 1160,233.6 1163,240 1167,245 1173,249 1178.7,254.4 1183,258 1186,264 1193,262 1201,264 1204,268 1205,273 1202,279 1203,284.7 1209,288 1216.5,290 1222,289 1230,292"/>
<polyline points="1330.8,564.5 1334,569.5 1328,572 1324,573 1326,580 1334,586 1336,594 1330,603 1322,608 1316.7,616 1322,625.8 1330,631 1333.7,635 1335.6,644.7 1331,649 1328,652 1327,660 1328,667 1333,673 1339,677 1346,680 1352.7,680.7 1362,682.6 1365,686 1364,690 1359,696 1354.6,701.5"/>
<polyline points="924,731 930,732 936.8,733.5 946.3,736.4 950,744.9 954.8,746.8 959.5,750.6 974.6,754.4 982.2,758 989.8,763.8 1001.1,762.9 1012.5,769.5 1027.6,770.4 1042.8,769.5 1045.6,761.9 1057.9,765.7 1069.3,769.5 1078.7,773.3 1088.2,775.2 1099.6,780.9 1105.3,788.4 1114.7,787.5 1126.1,791.3 1133.6,792.2 1143.1,786.5 1152.6,785.6 1158.2,787.5"/>
<polyline points="1359,456.8 1367.8,455 1378,458.5 1388,453.5 1398,450 1408.2,446.7 1418.3,448.4 1425,445"/>
<polyline points="1457,458.5 1455.3,467 1450.3,477 1447,488.8 1458.7,492 1465.4,497 1475.5,504 1487,502 1490.6,497 1502.4,507 1516,505.6 1522.6,499"/>
<polyline points="1457,458.5 1460,455 1468,459 1475.5,462 1479,473.6 1484,464 1489,456.8 1496,455 1502.4,455 1509,460 1516,463 1522.6,465"/>
<polyline points="1487,502 1489,515.7 1485.6,527.5 1475.5,530.8 1477,544 1470.4,546 1465.4,539 1455.3,541 1441.8,534 1436.8,529 1438.5,541 1431.8,551 1425,557.7 1421.7,567.8 1415,557.7 1408.2,554.4 1398,541 1394.8,530.8 1388,539 1383,547.6 1374.6,561 1367.8,566 1357.7,561 1347.6,567.8 1337.6,569.5 1330.8,564.5 1327.5,556 1322.4,544.3 1324,535.9"/>
<polyline points="1359,456.8 1356,461.9 1347.6,465 1341,470 1330.8,467 1327.5,473.6 1334,478.7 1324,487 1314,493.8 1307,502 1304,512 1293.8,524 1290.5,534 1293,542 1285.4,551 1293.8,551"/>
<polyline points="1359,456.8 1360,449 1362,440"/>
<polyline points="1276,205 1279,215 1271,224 1275,231 1283,233 1290,235 1293,240 1296.6,243.8 1298.7,251 1294.4,258.8"/>
<polyline points="1088.2,775.2 1093,772 1098,774.5 1099.6,780.9"/>
<polyline points="698.4,814 710.3,815.3 714,820 717,826.6 724,832 730.7,837.9 729,844 726,849 719.4,858 711,863 703.6,867 700,873 699,878.5 701,886 703.6,892 704,898 703.6,909"/>
</g>
</g></g>
<g fill="#fff" stroke="#6b6b6b" stroke-width=".8">
<circle cx="853" cy="237" r="1.5"/>
<circle cx="825" cy="262" r="1.5"/>
<circle cx="950" cy="224" r="1.5"/>
<circle cx="964" cy="230" r="1.5"/>
<circle cx="1008" cy="230" r="1.5"/>
<circle cx="1122" cy="214" r="1.5"/>
<circle cx="1019" cy="324" r="1.5"/>
<circle cx="1064" cy="328" r="1.5"/>
<circle cx="1197" cy="340" r="1.5"/>
<circle cx="1194" cy="256" r="1.5"/>
<circle cx="810" cy="401" r="1.5"/>
<circle cx="1022" cy="428" r="1.5"/>
<circle cx="989" cy="463" r="1.5"/>
<circle cx="1029" cy="522" r="1.5"/>
<circle cx="1072" cy="572" r="1.5"/>
<circle cx="1154.1" cy="574.7" r="1.5"/>
<circle cx="1236.2" cy="576.2" r="1.5"/>
<circle cx="1293" cy="566.5" r="1.5"/>
<circle cx="1275" cy="612" r="1.5"/>
<circle cx="1230" cy="695" r="1.5"/>
<circle cx="1191" cy="715" r="1.5"/>
<circle cx="1146" cy="771" r="1.5"/>
<circle cx="996" cy="733" r="1.5"/>
<circle cx="924" cy="731" r="1.5"/>
<circle cx="841" cy="723" r="1.5"/>
<circle cx="880" cy="736" r="1.5"/>
<circle cx="761" cy="777" r="1.5"/>
<circle cx="846" cy="793" r="1.5"/>
<circle cx="808" cy="813" r="1.5"/>
<circle cx="799" cy="835" r="1.5"/>
<circle cx="755.5" cy="876.7" r="1.5"/>
<circle cx="869.7" cy="896.6" r="1.5"/>
<circle cx="1043" cy="838" r="1.5"/>
<circle cx="1064" cy="865" r="1.5"/>
<circle cx="1142" cy="815" r="1.5"/>
<circle cx="1125" cy="843.5" r="1.5"/>
<circle cx="1290" cy="479" r="1.5"/>
<circle cx="1316" cy="525.8" r="1.5"/>
<circle cx="1294" cy="548" r="1.5"/>
<circle cx="1359" cy="456.8" r="1.5"/>
<circle cx="1405" cy="597" r="1.5"/>
<circle cx="1455" cy="622" r="1.5"/>
<circle cx="1406" cy="631" r="1.5"/>
<circle cx="1484" cy="638" r="1.5"/>
<circle cx="1461" cy="683" r="1.5"/>
<circle cx="1412" cy="820" r="1.5"/>
<circle cx="1404" cy="885" r="1.5"/>
<circle cx="1519.8" cy="766.9" r="1.5"/>
<circle cx="709" cy="854" r="1.5"/>
<circle cx="1291.2" cy="233" r="1.5"/>
<circle cx="1337" cy="235.8" r="1.5"/>
<circle cx="1360" cy="262.7" r="1.5"/>
<circle cx="1379.5" cy="225.9" r="1.5"/>
<circle cx="1415.8" cy="572.9" r="1.5"/>
<circle cx="1514" cy="596.8" r="1.5"/>
<circle cx="1153" cy="242" r="2.2"/>
<circle cx="937" cy="420" r="2.2"/>
<circle cx="988" cy="636" r="2.2"/>
<circle cx="1080" cy="715" r="2.2"/>
<circle cx="1258" cy="733" r="2.2"/>
<circle cx="1421" cy="663" r="2.2"/>
<circle cx="1402.8" cy="470" r="2.2"/>
<circle cx="974" cy="836" r="2.2"/>
<circle cx="1113" cy="852" r="2.2"/>
<circle cx="1121" cy="369" r="2.2"/><circle cx="1121" cy="369" r=".8" fill="#444" stroke="none"/>
<circle cx="1352" cy="707" r="2.2"/><circle cx="1352" cy="707" r=".8" fill="#444" stroke="none"/>
</g>
<g font-family="Liberation Sans" stroke="#fff" stroke-opacity=".75" stroke-width="2" paint-order="stroke" stroke-linejoin="round">
<text x="838" y="233.1" font-size="11.5" fill="#3d3d3d" textLength="30" lengthAdjust="spacingAndGlyphs">Exeter</text>
<text x="803" y="258.6" font-size="11.5" fill="#3d3d3d" textLength="45" lengthAdjust="spacingAndGlyphs">Plymouth</text>
<text x="882" y="228.6" font-size="11.5" fill="#3d3d3d" textLength="64" lengthAdjust="spacingAndGlyphs">Southampton</text>
<text x="937" y="243.1" font-size="11.5" fill="#3d3d3d" textLength="56" lengthAdjust="spacingAndGlyphs">Portsmouth</text>
<text x="987" y="226.1" font-size="11.5" fill="#3d3d3d" textLength="41" lengthAdjust="spacingAndGlyphs">Brighton</text>
<text x="1066" y="218.1" font-size="11.5" fill="#3d3d3d" textLength="52" lengthAdjust="spacingAndGlyphs">Dunkerque</text>
<text x="998.5" y="321.1" font-size="11.5" fill="#3d3d3d" textLength="40.9" lengthAdjust="spacingAndGlyphs">Le Havre</text>
<text x="1048.5" y="324.6" font-size="11.5" fill="#3d3d3d" textLength="30" lengthAdjust="spacingAndGlyphs">Rouen</text>
<text x="1183.5" y="352.6" font-size="11.5" fill="#3d3d3d" textLength="28.5" lengthAdjust="spacingAndGlyphs">Reims</text>
<text x="1165" y="260.1" font-size="11.5" fill="#3d3d3d" textLength="24" lengthAdjust="spacingAndGlyphs">Mons</text>
<text x="1274" y="229.6" font-size="11.5" fill="#3d3d3d" textLength="34" lengthAdjust="spacingAndGlyphs">Aachen</text>
<text x="1325.2" y="232.1" font-size="11.5" fill="#3d3d3d" textLength="24.3" lengthAdjust="spacingAndGlyphs">Bonn</text>
<text x="1341.8" y="260.1" font-size="11.5" fill="#3d3d3d" textLength="36.2" lengthAdjust="spacingAndGlyphs">Koblenz</text>
<text x="1364" y="223.1" font-size="11.5" fill="#3d3d3d" textLength="30.5" lengthAdjust="spacingAndGlyphs">Siegen</text>
<text x="1292" y="213.6" font-size="11.5" fill="#3d3d3d" textLength="60" lengthAdjust="spacingAndGlyphs">Düsseldorf</text>
<text x="798" y="412.6" font-size="11.5" fill="#3d3d3d" textLength="24" lengthAdjust="spacingAndGlyphs">Brest</text>
<text x="1003.5" y="438.6" font-size="11.5" fill="#3d3d3d" textLength="37.5" lengthAdjust="spacingAndGlyphs">Le Mans</text>
<text x="993" y="467.1" font-size="11.5" fill="#3d3d3d" textLength="34" lengthAdjust="spacingAndGlyphs">Angers</text>
<text x="1012" y="519.6" font-size="11.5" fill="#3d3d3d" textLength="35" lengthAdjust="spacingAndGlyphs">Poitiers</text>
<text x="1052" y="568.5" font-size="11.5" fill="#3d3d3d" textLength="39" lengthAdjust="spacingAndGlyphs">Limoges</text>
<text x="1130.6" y="560.1" font-size="11.5" fill="#3d3d3d" textLength="46.2" lengthAdjust="spacingAndGlyphs">Clermont-</text>
<text x="1136.4" y="571.8" font-size="11.5" fill="#3d3d3d" textLength="36" lengthAdjust="spacingAndGlyphs">Ferrand</text>
<text x="1207" y="572.1" font-size="11.5" fill="#3d3d3d" textLength="60" lengthAdjust="spacingAndGlyphs">Villeurbanne</text>
<text x="1276" y="580.1" font-size="11.5" fill="#3d3d3d" textLength="34" lengthAdjust="spacingAndGlyphs">Annecy</text>
<text x="1253" y="626.1" font-size="11.5" fill="#3d3d3d" textLength="44" lengthAdjust="spacingAndGlyphs">Grenoble</text>
<text x="1213" y="689.6" font-size="11.5" fill="#3d3d3d" textLength="39" lengthAdjust="spacingAndGlyphs">Avignon</text>
<text x="1163.5" y="711.1" font-size="11.5" fill="#3d3d3d" textLength="52.5" lengthAdjust="spacingAndGlyphs">Montpellier</text>
<text x="1121.5" y="783.6" font-size="11.5" fill="#3d3d3d" textLength="48.5" lengthAdjust="spacingAndGlyphs">Perpignan</text>
<text x="991" y="730.6" font-size="11.5" fill="#3d3d3d" textLength="16" lengthAdjust="spacingAndGlyphs">Pau</text>
<text x="899" y="717.1" font-size="11.5" fill="#3d3d3d" textLength="50" lengthAdjust="spacingAndGlyphs">Donostia /</text>
<text x="890.5" y="729.1" font-size="11.5" fill="#3d3d3d" textLength="64.5" lengthAdjust="spacingAndGlyphs">San Sebastián</text>
<text x="816.5" y="720.6" font-size="11.5" fill="#3d3d3d" textLength="48.5" lengthAdjust="spacingAndGlyphs">Santander</text>
<text x="866" y="748.6" font-size="11.5" fill="#3d3d3d" textLength="29" lengthAdjust="spacingAndGlyphs">Bilbao</text>
<text x="749.5" y="789.6" font-size="11.5" fill="#3d3d3d" textLength="22.5" lengthAdjust="spacingAndGlyphs">León</text>
<text x="829" y="789.6" font-size="11.5" fill="#3d3d3d" textLength="33.5" lengthAdjust="spacingAndGlyphs">Burgos</text>
<text x="788.5" y="810.1" font-size="11.5" fill="#3d3d3d" textLength="39" lengthAdjust="spacingAndGlyphs">Palencia</text>
<text x="749" y="839.6" font-size="11.5" fill="#3d3d3d" textLength="45.5" lengthAdjust="spacingAndGlyphs">Valladolid</text>
<text x="731" y="889.1" font-size="11.5" fill="#3d3d3d" textLength="51" lengthAdjust="spacingAndGlyphs">Salamanca</text>
<text x="841.4" y="893.6" font-size="11.5" fill="#3d3d3d" textLength="55.6" lengthAdjust="spacingAndGlyphs">Guadalajara</text>
<text x="1029" y="835.1" font-size="11.5" fill="#3d3d3d" textLength="27.5" lengthAdjust="spacingAndGlyphs">Lleida</text>
<text x="1053.5" y="877.6" font-size="11.5" fill="#3d3d3d" textLength="22" lengthAdjust="spacingAndGlyphs">Reus</text>
<text x="994" y="896.6" font-size="11.5" fill="#3d3d3d" textLength="36" lengthAdjust="spacingAndGlyphs">Castelló</text>
<text x="984" y="908.6" font-size="11.5" fill="#3d3d3d" textLength="56.5" lengthAdjust="spacingAndGlyphs">de la Plana /</text>
<text x="1127" y="827.6" font-size="11.5" fill="#3d3d3d" textLength="30" lengthAdjust="spacingAndGlyphs">Girona</text>
<text x="1129.5" y="847.1" font-size="11.5" fill="#3d3d3d" textLength="33.5" lengthAdjust="spacingAndGlyphs">Mataró</text>
<text x="1292" y="483.1" font-size="11.5" fill="#3d3d3d" textLength="46" lengthAdjust="spacingAndGlyphs">Besançon</text>
<text x="1293.5" y="523.1" font-size="11.5" fill="#3d3d3d" textLength="44.5" lengthAdjust="spacingAndGlyphs">Lausanne</text>
<text x="1276.7" y="544.1" font-size="11.5" fill="#3d3d3d" textLength="33.9" lengthAdjust="spacingAndGlyphs">Genève</text>
<text x="1347" y="453.6" font-size="11.5" fill="#3d3d3d" textLength="25" lengthAdjust="spacingAndGlyphs">Basel</text>
<text x="1389.6" y="593.5" font-size="11.5" fill="#3d3d3d" textLength="33.1" lengthAdjust="spacingAndGlyphs">Novara</text>
<text x="1435" y="619.1" font-size="11.5" fill="#3d3d3d" textLength="40.3" lengthAdjust="spacingAndGlyphs">Piacenza</text>
<text x="1379" y="643.5" font-size="11.5" fill="#3d3d3d" textLength="54" lengthAdjust="spacingAndGlyphs">Alessandria</text>
<text x="1469" y="650.1" font-size="11.5" fill="#3d3d3d" textLength="30.4" lengthAdjust="spacingAndGlyphs">Parma</text>
<text x="1465" y="687.6" font-size="11.5" fill="#3d3d3d" textLength="43" lengthAdjust="spacingAndGlyphs">La Spezia</text>
<text x="1399.8" y="569.4" font-size="11.5" fill="#3d3d3d" textLength="31.2" lengthAdjust="spacingAndGlyphs">Varese</text>
<text x="1497.5" y="608.7" font-size="11.5" fill="#3d3d3d" textLength="34.5" lengthAdjust="spacingAndGlyphs">Verona</text>
<text x="1395.5" y="832.6" font-size="11.5" fill="#3d3d3d" textLength="32.5" lengthAdjust="spacingAndGlyphs">Ajaccio</text>
<text x="1387.5" y="876.0" font-size="11.5" fill="#3d3d3d" textLength="32.5" lengthAdjust="spacingAndGlyphs">Tàttari/</text>
<text x="1387.5" y="887.9" font-size="11.5" fill="#3d3d3d" textLength="32.5" lengthAdjust="spacingAndGlyphs">Sassari</text>
<text x="1498.8" y="764.1" font-size="11.5" fill="#3d3d3d" textLength="41.2" lengthAdjust="spacingAndGlyphs">Grosseto</text>
<text x="686" y="850.6" font-size="11.5" fill="#3d3d3d" textLength="50" lengthAdjust="spacingAndGlyphs">Mogadouro</text>
<text x="1142.5" y="238.5" font-size="14" fill="#2b2b2b" textLength="23.5" lengthAdjust="spacingAndGlyphs">Lille</text>
<text x="1107.5" y="363.5" font-size="14" fill="#2b2b2b" textLength="27" lengthAdjust="spacingAndGlyphs">Paris</text>
<text x="943" y="424.5" font-size="14" fill="#2b2b2b" textLength="41" lengthAdjust="spacingAndGlyphs">Rennes</text>
<text x="929" y="641.5" font-size="14" fill="#2b2b2b" textLength="54" lengthAdjust="spacingAndGlyphs">Bordeaux</text>
<text x="1024.8" y="719.0" font-size="14" fill="#2b2b2b" textLength="49.2" lengthAdjust="spacingAndGlyphs">Toulouse</text>
<text x="1233.5" y="748.5" font-size="14" fill="#2b2b2b" textLength="50.5" lengthAdjust="spacingAndGlyphs">Marseille</text>
<text x="1329.6" y="701.4" font-size="14" fill="#2b2b2b" textLength="44.3" lengthAdjust="spacingAndGlyphs">Monaco</text>
<text x="1399.6" y="678.7" font-size="14" fill="#2b2b2b" textLength="42" lengthAdjust="spacingAndGlyphs">Genova</text>
<text x="1385" y="465.5" font-size="14" fill="#2b2b2b" textLength="35" lengthAdjust="spacingAndGlyphs">Zürich</text>
<text x="948.5" y="831.0" font-size="14" fill="#2b2b2b" textLength="51" lengthAdjust="spacingAndGlyphs">Zaragoza</text>
<text x="1085" y="865.5" font-size="14" fill="#2b2b2b" textLength="56" lengthAdjust="spacingAndGlyphs">Barcelona</text>
<text x="1481" y="709.0" font-size="14" fill="#2b2b2b" textLength="40" lengthAdjust="spacingAndGlyphs">Firenze</text>
<text x="1508" y="654.5" font-size="14" fill="#2b2b2b" textLength="52" lengthAdjust="spacingAndGlyphs">Bologna</text>
<text x="1062" y="785.0" font-size="13.5" fill="#76577f" textLength="48" lengthAdjust="spacing">Andorra</text>
<text x="1079" y="511.5" font-size="13.5" fill="#76577f" textLength="39" lengthAdjust="spacing">France</text>
<text x="870.5" y="324.0" font-size="13.5" fill="#76577f" textLength="57.5" lengthAdjust="spacing">Guernsey</text>
<text x="895.5" y="354.0" font-size="13.5" fill="#76577f" textLength="38.5" lengthAdjust="spacing">Jersey</text>
<text x="1212.6" y="241.5" font-size="13.5" fill="#76577f" textLength="44.8" lengthAdjust="spacing">België /</text>
<text x="1204.6" y="257.0" font-size="13.5" fill="#76577f" textLength="61.4" lengthAdjust="spacing">Belgique /</text>
<text x="1213" y="272.5" font-size="13.5" fill="#76577f" textLength="49" lengthAdjust="spacing">Belgien</text>
<text x="1372" y="497.5" font-size="13.5" fill="#76577f" textLength="52" lengthAdjust="spacing">Schweiz/</text>
<text x="1350.5" y="512.5" font-size="13.5" fill="#76577f" textLength="96.5" lengthAdjust="spacing">Suisse/Svizzera/</text>
<text x="1380.5" y="528.0" font-size="13.5" fill="#76577f" textLength="35.5" lengthAdjust="spacing">Svizra</text>
<text x="991" y="353.7" font-size="10.5" fill="#84679a" font-style="italic" textLength="49.5" lengthAdjust="spacingAndGlyphs">Normandie</text>
<text x="1123" y="288.4" font-size="10.5" fill="#84679a" font-style="italic" textLength="42.4" lengthAdjust="spacingAndGlyphs">Hauts-de-</text>
<text x="1130" y="300.2" font-size="10.5" fill="#84679a" font-style="italic" textLength="28.5" lengthAdjust="spacingAndGlyphs">France</text>
<text x="872" y="419.7" font-size="10.5" fill="#84679a" font-style="italic" textLength="40" lengthAdjust="spacingAndGlyphs">Bretagne</text>
<text x="946" y="464.7" font-size="10.5" fill="#84679a" font-style="italic" textLength="32.5" lengthAdjust="spacingAndGlyphs">Pays de</text>
<text x="946" y="476.2" font-size="10.5" fill="#84679a" font-style="italic" textLength="33" lengthAdjust="spacingAndGlyphs">la Loire</text>
<text x="1070.7" y="448.7" font-size="10.5" fill="#84679a" font-style="italic" textLength="46.3" lengthAdjust="spacingAndGlyphs">Centre-Val</text>
<text x="1075.8" y="460.2" font-size="10.5" fill="#84679a" font-style="italic" textLength="34.2" lengthAdjust="spacingAndGlyphs">de Loire</text>
<text x="1212.8" y="468.3" font-size="10.5" fill="#84679a" font-style="italic" textLength="50.5" lengthAdjust="spacingAndGlyphs">Bourgogne-</text>
<text x="1218.7" y="479.7" font-size="10.5" fill="#84679a" font-style="italic" textLength="39.5" lengthAdjust="spacingAndGlyphs">Franche-</text>
<text x="1225.4" y="491.5" font-size="10.5" fill="#84679a" font-style="italic" textLength="27.8" lengthAdjust="spacingAndGlyphs">Comté</text>
<text x="1012" y="622.7" font-size="10.5" fill="#84679a" font-style="italic" textLength="42" lengthAdjust="spacingAndGlyphs">Nouvelle-</text>
<text x="1012" y="634.2" font-size="10.5" fill="#84679a" font-style="italic" textLength="42" lengthAdjust="spacingAndGlyphs">Aquitaine</text>
<text x="1092" y="712.5" font-size="10.5" fill="#84679a" font-style="italic" textLength="39.7" lengthAdjust="spacingAndGlyphs">Occitanie</text>
<text x="1209" y="593.7" font-size="10.5" fill="#84679a" font-style="italic" textLength="44" lengthAdjust="spacingAndGlyphs">Auvergne-</text>
<text x="1204.6" y="604.7" font-size="10.5" fill="#84679a" font-style="italic" textLength="53.6" lengthAdjust="spacingAndGlyphs">Rhône-Alpes</text>
<text x="1277" y="676.4" font-size="10.5" fill="#84679a" font-style="italic" textLength="42" lengthAdjust="spacingAndGlyphs">Provence-</text>
<text x="1274" y="687.7" font-size="10.5" fill="#84679a" font-style="italic" textLength="48" lengthAdjust="spacingAndGlyphs">Alpes-Côte</text>
<text x="1284.5" y="699.2" font-size="10.5" fill="#84679a" font-style="italic" textLength="27.5" lengthAdjust="spacingAndGlyphs">d'Azur</text>
<text x="913.1" y="774.2" font-size="10.5" fill="#84679a" font-style="italic" textLength="36" lengthAdjust="spacingAndGlyphs">Navarra</text>
<text x="908.4" y="786.1" font-size="10.5" fill="#84679a" font-style="italic" textLength="45.4" lengthAdjust="spacingAndGlyphs">- Nafarroa</text>
<text x="726.4" y="733.0" font-size="10.5" fill="#84679a" font-style="italic" textLength="41.6" lengthAdjust="spacingAndGlyphs">Asturias /</text>
<text x="730" y="744.7" font-size="10.5" fill="#84679a" font-style="italic" textLength="34" lengthAdjust="spacingAndGlyphs">Asturies</text>
<text x="811" y="831.7" font-size="10.5" fill="#84679a" font-style="italic" textLength="32" lengthAdjust="spacingAndGlyphs">Castilla</text>
<text x="812.5" y="843.7" font-size="10.5" fill="#84679a" font-style="italic" textLength="28.5" lengthAdjust="spacingAndGlyphs">y León</text>
<text x="960.7" y="854.7" font-size="10.5" fill="#84679a" font-style="italic" textLength="31.7" lengthAdjust="spacingAndGlyphs">Aragón</text>
<text x="1065.7" y="836.5" font-size="10.5" fill="#84679a" font-style="italic" textLength="44.3" lengthAdjust="spacingAndGlyphs">Catalunya</text>
<text x="1412.2" y="253.2" font-size="10.5" fill="#84679a" font-style="italic" textLength="30.2" lengthAdjust="spacingAndGlyphs">Hessen</text>
<text x="1180.3" y="214.0" font-size="10.5" fill="#84679a" font-style="italic" textLength="49.5" lengthAdjust="spacingAndGlyphs">Vlaanderen</text>
<text x="1431" y="586.7" font-size="10.5" fill="#84679a" font-style="italic" textLength="47.5" lengthAdjust="spacingAndGlyphs">Lombardia</text>
<text x="1350" y="611.7" font-size="10.5" fill="#84679a" font-style="italic" textLength="40.5" lengthAdjust="spacingAndGlyphs">Piemonte</text>
<text x="1508" y="729.4" font-size="10.5" fill="#84679a" font-style="italic" textLength="37" lengthAdjust="spacingAndGlyphs">Toscana</text>
<text x="1513" y="481.2" font-size="10.5" fill="#84679a" font-style="italic" textLength="20" lengthAdjust="spacingAndGlyphs">Tirol</text>
<text x="1506" y="527.7" font-size="10.5" fill="#84679a" font-style="italic" textLength="43" lengthAdjust="spacingAndGlyphs">Trentino-</text>
<text x="1500" y="539.2" font-size="10.5" fill="#84679a" font-style="italic" textLength="50" lengthAdjust="spacingAndGlyphs">Alto Adige/</text>
<text x="1508" y="550.7" font-size="10.5" fill="#84679a" font-style="italic" textLength="37" lengthAdjust="spacingAndGlyphs">Südtirol</text>
</g>
</svg>
<div class="abs" style="left:1140.8px;top:243.4px;width:30px;height:30px;border-radius:50%;background:rgba(253,156,115,.6)"></div>
<div class="abs" style="left:1145.8px;top:248.4px;width:30px;height:30px;border-radius:50%;background:rgba(243,128,28,.8);font-size:12px;line-height:30px;text-align:center;color:#2a2a2a">379</div>
<div class="abs" style="left:952.8px;top:315.9px;width:30px;height:30px;border-radius:50%;background:rgba(253,156,115,.6)"></div>
<div class="abs" style="left:957.8px;top:320.9px;width:30px;height:30px;border-radius:50%;background:rgba(243,128,28,.8);font-size:12px;line-height:30px;text-align:center;color:#2a2a2a">115</div>
<div class="abs" style="left:1073.0px;top:352.0px;width:30px;height:30px;border-radius:50%;background:rgba(253,156,115,.6)"></div>
<div class="abs" style="left:1078.0px;top:357.0px;width:30px;height:30px;border-radius:50%;background:rgba(243,128,28,.8);font-size:12px;line-height:30px;text-align:center;color:#2a2a2a">1620</div>
<div class="abs" style="left:1190.8px;top:309.9px;width:30px;height:30px;border-radius:50%;background:rgba(241,211,87,.62)"></div>
<div class="abs" style="left:1195.8px;top:314.9px;width:30px;height:30px;border-radius:50%;background:rgba(241,196,14,.84);font-size:12px;line-height:30px;text-align:center;color:#2a2a2a">39</div>
<div class="abs" style="left:821.3px;top:387.9px;width:30px;height:30px;border-radius:50%;background:rgba(241,211,87,.62)"></div>
<div class="abs" style="left:826.3px;top:392.9px;width:30px;height:30px;border-radius:50%;background:rgba(241,196,14,.84);font-size:12px;line-height:30px;text-align:center;color:#2a2a2a">70</div>
<div class="abs" style="left:933.3px;top:420.9px;width:30px;height:30px;border-radius:50%;background:rgba(253,156,115,.6)"></div>
<div class="abs" style="left:938.3px;top:425.9px;width:30px;height:30px;border-radius:50%;background:rgba(243,128,28,.8);font-size:12px;line-height:30px;text-align:center;color:#2a2a2a">435</div>
<div class="abs" style="left:1028.8px;top:406.2px;width:30px;height:30px;border-radius:50%;background:rgba(253,156,115,.6)"></div>
<div class="abs" style="left:1033.8px;top:411.2px;width:30px;height:30px;border-radius:50%;background:rgba(243,128,28,.8);font-size:12px;line-height:30px;text-align:center;color:#2a2a2a">140</div>
<div class="abs" style="left:1106.8px;top:431.9px;width:30px;height:30px;border-radius:50%;background:rgba(181,226,140,.65)"></div>
<div class="abs" style="left:1111.8px;top:436.9px;width:30px;height:30px;border-radius:50%;background:rgba(118,206,62,.82);font-size:12px;line-height:30px;text-align:center;color:#2a2a2a">3</div>
<div class="abs" style="left:1203.0px;top:459.0px;width:30px;height:30px;border-radius:50%;background:rgba(253,156,115,.6)"></div>
<div class="abs" style="left:1208.0px;top:464.0px;width:30px;height:30px;border-radius:50%;background:rgba(243,128,28,.8);font-size:12px;line-height:30px;text-align:center;color:#2a2a2a">171</div>
<div class="abs" style="left:1117.8px;top:487.9px;width:30px;height:30px;border-radius:50%;background:rgba(241,211,87,.62)"></div>
<div class="abs" style="left:1122.8px;top:492.9px;width:30px;height:30px;border-radius:50%;background:rgba(241,196,14,.84);font-size:12px;line-height:30px;text-align:center;color:#2a2a2a">48</div>
<div class="abs" style="left:966.8px;top:520.4px;width:30px;height:30px;border-radius:50%;background:rgba(241,211,87,.62)"></div>
<div class="abs" style="left:971.8px;top:525.4px;width:30px;height:30px;border-radius:50%;background:rgba(241,196,14,.84);font-size:12px;line-height:30px;text-align:center;color:#2a2a2a">66</div>
<div class="abs" style="left:1051.3px;top:577.9px;width:30px;height:30px;border-radius:50%;background:rgba(253,156,115,.6)"></div>
<div class="abs" style="left:1056.3px;top:582.9px;width:30px;height:30px;border-radius:50%;background:rgba(243,128,28,.8);font-size:12px;line-height:30px;text-align:center;color:#2a2a2a">119</div>
<div class="abs" style="left:1188.3px;top:576.9px;width:30px;height:30px;border-radius:50%;background:rgba(253,156,115,.6)"></div>
<div class="abs" style="left:1193.3px;top:581.9px;width:30px;height:30px;border-radius:50%;background:rgba(243,128,28,.8);font-size:12px;line-height:30px;text-align:center;color:#2a2a2a">514</div>
<div class="abs" style="left:1309.8px;top:577.4px;width:30px;height:30px;border-radius:50%;background:rgba(181,226,140,.65)"></div>
<div class="abs" style="left:1314.8px;top:582.4px;width:30px;height:30px;border-radius:50%;background:rgba(118,206,62,.82);font-size:12px;line-height:30px;text-align:center;color:#2a2a2a">2</div>
<div class="abs" style="left:952.8px;top:627.4px;width:30px;height:30px;border-radius:50%;background:rgba(253,156,115,.6)"></div>
<div class="abs" style="left:957.8px;top:632.4px;width:30px;height:30px;border-radius:50%;background:rgba(243,128,28,.8);font-size:12px;line-height:30px;text-align:center;color:#2a2a2a">104</div>
<div class="abs" style="left:1293.3px;top:664.9px;width:30px;height:30px;border-radius:50%;background:rgba(253,156,115,.6)"></div>
<div class="abs" style="left:1298.3px;top:669.9px;width:30px;height:30px;border-radius:50%;background:rgba(243,128,28,.8);font-size:12px;line-height:30px;text-align:center;color:#2a2a2a">104</div>
<div class="abs" style="left:1208.8px;top:683.9px;width:30px;height:30px;border-radius:50%;background:rgba(253,156,115,.6)"></div>
<div class="abs" style="left:1213.8px;top:688.9px;width:30px;height:30px;border-radius:50%;background:rgba(243,128,28,.8);font-size:12px;line-height:30px;text-align:center;color:#2a2a2a">289</div>
<div class="abs" style="left:957.3px;top:705.4px;width:30px;height:30px;border-radius:50%;background:rgba(241,211,87,.62)"></div>
<div class="abs" style="left:962.3px;top:710.4px;width:30px;height:30px;border-radius:50%;background:rgba(241,196,14,.84);font-size:12px;line-height:30px;text-align:center;color:#2a2a2a">73</div>
<div class="abs" style="left:1052.3px;top:708.4px;width:30px;height:30px;border-radius:50%;background:rgba(253,156,115,.6)"></div>
<div class="abs" style="left:1057.3px;top:713.4px;width:30px;height:30px;border-radius:50%;background:rgba(243,128,28,.8);font-size:12px;line-height:30px;text-align:center;color:#2a2a2a">201</div>
<div class="abs" style="left:1128.3px;top:707.4px;width:30px;height:30px;border-radius:50%;background:rgba(241,211,87,.62)"></div>
<div class="abs" style="left:1133.3px;top:712.4px;width:30px;height:30px;border-radius:50%;background:rgba(241,196,14,.84);font-size:12px;line-height:30px;text-align:center;color:#2a2a2a">46</div>
<div class="abs" style="left:1415.3px;top:766.9px;width:30px;height:30px;border-radius:50%;background:rgba(241,211,87,.62)"></div>
<div class="abs" style="left:1420.3px;top:771.9px;width:30px;height:30px;border-radius:50%;background:rgba(241,196,14,.84);font-size:12px;line-height:30px;text-align:center;color:#2a2a2a">13</div>
<svg class="abs" style="left:1195px;top:617px" width="50" height="44" viewBox="0 0 50 44">
<defs><linearGradient id="pg" x1="0" y1="0" x2="0" y2="1"><stop offset="0" stop-color="#3d94d6"/><stop offset="1" stop-color="#1e6fb8"/></linearGradient>
<filter id="pb" x="-50%" y="-50%" width="200%" height="200%"><feGaussianBlur stdDeviation="2.3"/></filter></defs>
<path d="M13 40.5 L27 22 Q36 13 34 24 Z" fill="#000" opacity=".3" filter="url(#pb)"/>
<path d="M12.7 41 C10.5 33 0.6 24.5 0.6 14.2 C0.6 6.5 6 1.6 12.7 1.6 C19.4 1.6 24.8 6.5 24.8 14.2 C24.8 24.5 14.9 33 12.7 41Z" fill="url(#pg)" stroke="#1b65a8" stroke-width="1"/>
<circle cx="12.7" cy="13.3" r="4.3" fill="#fff"/></svg>
<div style="position:absolute;left:708px;width:26px;background:#fff;border-radius:4px;box-shadow:0 1px 5px rgba(0,0,0,.45);top:219px;height:53px"></div>
<div class="abs" style="left:708px;top:245px;width:26px;height:1px;background:#ccc"></div>
<svg class="abs" style="left:714.5px;top:226px" width="12" height="12" viewBox="0 0 12 12"><path d="M6 0.8V11.2M0.8 6H11.2" stroke="#0b1554" stroke-width="2.3"/></svg>
<svg class="abs" style="left:715.5px;top:258px" width="10" height="3" viewBox="0 0 10 3"><path d="M0.5 1.5H9.5" stroke="#0b1554" stroke-width="2.3"/></svg>
<div style="position:absolute;left:708px;width:26px;background:#fff;border-radius:4px;box-shadow:0 1px 5px rgba(0,0,0,.45);top:282px;height:26px"></div>
<svg class="abs" style="left:713px;top:287px" width="16" height="16" viewBox="0 0 16 16" fill="none" stroke="#333" stroke-width="1.9"><path d="M1 5.6V1H5.6M10.4 1H15V5.6M15 10.4V15H10.4M5.6 15H1V10.4"/></svg>
<div style="position:absolute;left:708px;width:26px;background:#fff;border-radius:4px;box-shadow:0 1px 5px rgba(0,0,0,.45);top:318px;height:26px"></div>
<svg class="abs" style="left:712.6px;top:324.5px" width="17" height="17" viewBox="0 0 17 17"><g transform="rotate(45 8.5 8.5)" fill="#1769a6">
<rect x="6.6" y="-2.4" width="3.8" height="4.2" rx="0.9"/><path d="M6.6 3H10.4V13.6Q10.4 15.8 8.5 16.8Q6.6 15.8 6.6 13.6Z"/></g>
<g transform="rotate(45 8.5 8.5)" stroke="#fff" stroke-width="0.7" opacity=".8"><path d="M6.6 5.4H10.4M6.6 7.9H10.4M6.6 10.4H10.4"/></g></svg>
<div style="position:absolute;left:708px;width:26px;background:#fff;border-radius:4px;box-shadow:0 1px 5px rgba(0,0,0,.45);top:353.6px;height:26px"></div>
<svg class="abs" style="left:714.6px;top:359.8px" width="14" height="18" viewBox="0 0 14 18" fill="#1769a6">
<path d="M2.4 0.6H11.9Q12.9 0.6 12.9 1.3Q12.9 2 11.9 2H11.4V8.2Q13.3 9.2 13.3 12H1.2Q1.2 9.2 3 8.2V2H2.4Q1.4 2 1.4 1.3Q1.4 0.6 2.4 0.6Z"/><rect x="6.4" y="12" width="1.6" height="5" rx="0.6"/></svg>
<div class="abs" style="left:1477.3px;top:219px;width:35.8px;height:35.5px;background:#fff;border-radius:5px;box-shadow:0 1px 5px rgba(0,0,0,.4)"></div>
<svg class="abs" style="left:1480.2px;top:222.6px" width="30" height="30" viewBox="0 0 28 28">
<path d="M14 13.6L26.4 19.8L14 26L1.6 19.8Z" fill="#939393" stroke="#fff" stroke-width=".6"/>
<path d="M14 8.6L26.4 14.8L14 21L1.6 14.8Z" fill="#adadad" stroke="#fff" stroke-width=".6"/>
<path d="M14 3.6L26.4 9.8L14 16L1.6 9.8Z" fill="#cbcbcb" stroke="#fff" stroke-width=".6"/></svg>
<div class="abs" style="left:1234px;top:265px;width:279px;height:172px;background:#fff;border-radius:5px;box-shadow:0 1px 5px rgba(0,0,0,.4)"></div>
<div class="abs" style="left:1243.6px;top:274.10px;width:13px;height:13px;border:1px solid #767676;border-radius:2.5px;background:#fff"></div>
<div class="t" style="left:1264px;top:275.10px;font-size:12px;line-height:15px;color:#333">Menuiserie extérieure, charpente, couverture</div>
<div class="abs" style="left:1243.6px;top:294.10px;width:13px;height:13px;border:1px solid #767676;border-radius:2.5px;background:#fff"></div>
<div class="t" style="left:1264px;top:295.08px;font-size:12px;line-height:15px;color:#333">Travaux (peinture, sol, menuiserie,...)</div>
<div class="abs" style="left:1243.6px;top:314.10px;width:13px;height:13px;border:1px solid #767676;border-radius:2.5px;background:#fff"></div>
<div class="t" style="left:1264px;top:315.06px;font-size:12px;line-height:15px;color:#333">Gros œuvre</div>
<div class="abs" style="left:1243.6px;top:334.10px;width:13px;height:13px;border:1px solid #767676;border-radius:2.5px;background:#fff"></div>
<div class="t" style="left:1264px;top:335.04px;font-size:12px;line-height:15px;color:#333">VRD, terrassement</div>
<div class="abs" style="left:1243.6px;top:354.10px;width:13px;height:13px;border:1px solid #767676;border-radius:2.5px;background:#fff"></div>
<div class="t" style="left:1264px;top:355.02px;font-size:12px;line-height:15px;color:#333">Electricité, chauffage, plomberie</div>
<div class="abs" style="left:1243.6px;top:374.10px;width:13px;height:13px;border:1px solid #767676;border-radius:2.5px;background:#fff"></div>
<div class="t" style="left:1264px;top:375.00px;font-size:12px;line-height:15px;color:#333">Espaces verts</div>
<div class="abs" style="left:1243.6px;top:394.10px;width:13px;height:13px;border:1px solid #767676;border-radius:2.5px;background:#fff"></div>
<div class="t" style="left:1264px;top:394.98px;font-size:12px;line-height:15px;color:#333">Tous Corps d'Etat (TCE), entreprise générale</div>
<div class="abs" style="left:1243.6px;top:414.10px;width:13px;height:13px;border:1px solid #767676;border-radius:2.5px;background:#fff"></div>
<div class="t" style="left:1264px;top:414.96px;font-size:12px;line-height:15px;color:#333">Autre (nettoyage, incendie, ascenseur,...)</div>
<div class="abs" style="left:1228px;top:258px;width:292px;height:188px;border:3px solid #ff0000;border-radius:1.5px"></div>
<svg class="abs" style="left:1500px;top:440px" width="110" height="110" viewBox="1500 440 110 110">
<path d="M1596.6 538.8L1524 457" stroke="#ff0000" stroke-width="3" stroke-linecap="round"/><path d="M1515.6 447.7L1522.1 462.2L1529 455.2Z" fill="#ff0000"/></svg>
<div id="hdr">
<div class="t" style="left:396px;top:60px;font-size:17px;color:#f4f5f8;filter:blur(.7px)">Contacts</div>
<div class="t" style="left:712px;top:58px;font-size:17px;color:#f5f6f9;filter:blur(.7px)">Liste de sièges</div>
<div class="t" style="left:862px;top:58px;font-size:17px;color:#f5f6f9;filter:blur(.7px)">Actifs</div>
<div class="t" style="left:974px;top:58px;font-size:17px;color:#f5f6f9;filter:blur(.7px)">CA</div>
<div class="t" style="left:1040px;top:58px;font-size:17px;color:#f5f6f9;filter:blur(.7px)">Plus d'infos</div>
<svg class="abs" style="left:366px;top:24px" width="38" height="24" viewBox="0 0 38 24">
<path d="M12.1 0 H23.95 C21.5 4.2 17.4 10.6 13.8 19 C12.4 22 7 23.8 0.1 23.9 V12.1 C6.6 11.5 11.5 7 12.1 0Z" fill="#ee5bb0"/>
<path d="M37.1 0 V11.7 C31 12.5 26.5 16.5 25.1 23.7 H13.1 V20.4 C13.3 19.7 13.7 19.3 14.2 19 C18.5 16 21 12 22.2 8.9 C23.2 6 24 4.2 25.2 3.1 C28 1.2 32 0.2 37.1 0Z" fill="#1a3fd4"/>
<circle cx="34.2" cy="20.9" r="3" fill="#1a3fd4"/></svg>
<div class="t" style="left:414.5px;top:19.5px;font-size:28.4px;line-height:32px;font-weight:700;color:#07146b;letter-spacing:0.058px">CORPORAMA</div>
<div class="t" style="left:635px;top:27px;font-size:15px;line-height:18px;color:#444;letter-spacing:0.255px">Ciblage :</div>
<div class="abs" style="left:705px;top:16px;width:215px;height:38px;border-radius:19px;background:#10bebf"></div>
<svg class="abs" style="left:720.15px;top:25.85px" width="17.5" height="17.5" viewBox="0 0 17.5 17.5" fill="none" stroke="#fff">
<circle cx="8.75" cy="8.75" r="5.8" stroke-width="2.5"/><path d="M8.75 0.2V6M8.75 11.5V17.3M0.2 8.75H6M11.5 8.75H17.3" stroke-width="2.3"/><circle cx="8.75" cy="8.75" r="1.3" fill="#fff" stroke="none"/></svg>
<div class="t" style="left:743px;top:25px;font-size:17.2px;line-height:20px;font-weight:700;color:#fff;letter-spacing:0.133px">Classique</div>
<div class="abs" style="left:843.7px;top:27.5px;width:2.6px;height:16.5px;background:#fff"></div>
<svg class="abs" style="left:865.65px;top:25.4px" width="18.5" height="18.5" viewBox="0 0 18.5 18.5" fill="none" stroke="#fff">
<rect x="3.1" y="3.1" width="12.3" height="12.3" rx="2.2" fill="#fff" stroke="none"/><rect x="5.5" y="5.5" width="7.5" height="7.5" rx="1" stroke="#10bebf" stroke-opacity=".45" stroke-width=".8"/>
<path d="M6 0.3V3.4M9.25 0.3V3.4M12.5 0.3V3.4M6 15.1V18.2M9.25 15.1V18.2M12.5 15.1V18.2M0.3 6H3.4M0.3 9.25H3.4M0.3 12.5H3.4M15.1 6H18.2M15.1 9.25H18.2M15.1 12.5H18.2" stroke-width="1.9"/></svg>
<div class="t" style="left:889.2px;top:25px;font-size:17.2px;line-height:20px;font-weight:700;color:#fff;letter-spacing:0.256px">IA</div>
<div class="abs" style="left:934px;top:15px;width:400px;height:42px;border-radius:21px;border:1px solid #5a5a5a;background:#fff"></div>
<div class="t" style="left:951.3px;top:28px;font-size:13.6px;line-height:17px;color:#6a6a6a;letter-spacing:0.065px">Société ou SIREN</div>
<svg class="abs" style="left:1266px;top:29px" width="20" height="18" viewBox="0 0 20 18" fill="none" stroke="#333" stroke-width="1.5">
<path d="M0.5 3.2H19.5M0.5 9H19.5M0.5 14.8H19.5"/><circle cx="7" cy="3.2" r="2" fill="#fff"/><circle cx="13.2" cy="9" r="2" fill="#fff"/><circle cx="6.2" cy="14.8" r="2" fill="#fff"/></svg>
<svg class="abs" style="left:1297px;top:28.5px" width="20" height="20" viewBox="0 0 20 20" fill="none" stroke="#333" stroke-width="1.6">
<circle cx="8" cy="8" r="6.3"/><path d="M12.6 12.6L18.6 18.6" stroke-linecap="round"/></svg>
<svg class="abs" style="left:1364px;top:12.5px" width="31" height="31" viewBox="0 0 31 31" fill="none">
<rect x="2.8" y="2.7" width="20.7" height="25.9" rx="2.8" stroke="#333" stroke-width="2.8"/>
<circle cx="13.1" cy="11.6" r="3.6" fill="#333"/><path d="M6.8 22.2 Q6.8 16.6 13.1 16.6 Q19.4 16.6 19.4 22.2Z" fill="#333"/>
<path d="M27.6 4.6V8.6M27.6 11.4V15.4M27.6 18.2V22.2" stroke="#333" stroke-width="1.9" stroke-linecap="round"/></svg>
<div class="t" style="left:1346.8px;top:46px;font-size:15px;line-height:18px;color:#333;letter-spacing:0.537px">Contacts</div>
<div class="abs" style="left:1453px;top:20px;width:42px;height:42px;border-radius:50%;background:#081153"></div>
<div class="t" style="left:1460.3px;top:29.5px;font-size:21px;line-height:24px;color:#fff;letter-spacing:0.320px">LC</div>
<svg class="abs" style="left:1506.5px;top:33px" width="20" height="12" viewBox="0 0 20 12"><path d="M2 1.2H18Q19.6 1.2 18.5 2.6L11.2 10.4Q10 11.6 8.8 10.4L1.5 2.6Q0.4 1.2 2 1.2Z" fill="#333"/></svg>
</div>
<div class="abs" style="left:3px;top:888px;width:241px;height:45px;border-radius:23px;background:#5fa3f7;box-shadow:0 3px 10px rgba(0,0,0,.22);z-index:60"></div>
<div class="t" style="left:21px;top:900.5px;font-size:17px;line-height:21px;font-weight:700;color:#fff;letter-spacing:0.043px;z-index:61">Academie Corporama</div>
<svg class="abs" style="left:209.5px;top:898.5px;z-index:61" width="23" height="23" viewBox="0 0 23 23">
<path d="M7.2 9V17.6Q7.2 21 10.6 21H17.2Q21.6 21 21.6 16.6V9.8Q21.6 7.6 20.2 7.2" fill="none" stroke="#fff" stroke-width="3" stroke-linecap="round"/>
<g transform="rotate(-6 9.5 9)"><path d="M5.6 0.6H13.5Q18.1 0.6 18.1 5.2V12.9Q18.1 17.5 13.5 17.5H5.6Q1 17.5 1 12.9V5.2Q1 0.6 5.6 0.6Z" fill="#fff" stroke="#5fa3f7" stroke-width="1"/>
<text x="9.6" y="13.6" font-family="Liberation Sans" font-size="13" font-weight="700" fill="#5fa3f7" text-anchor="middle">?</text></g></svg>
</body></html>
